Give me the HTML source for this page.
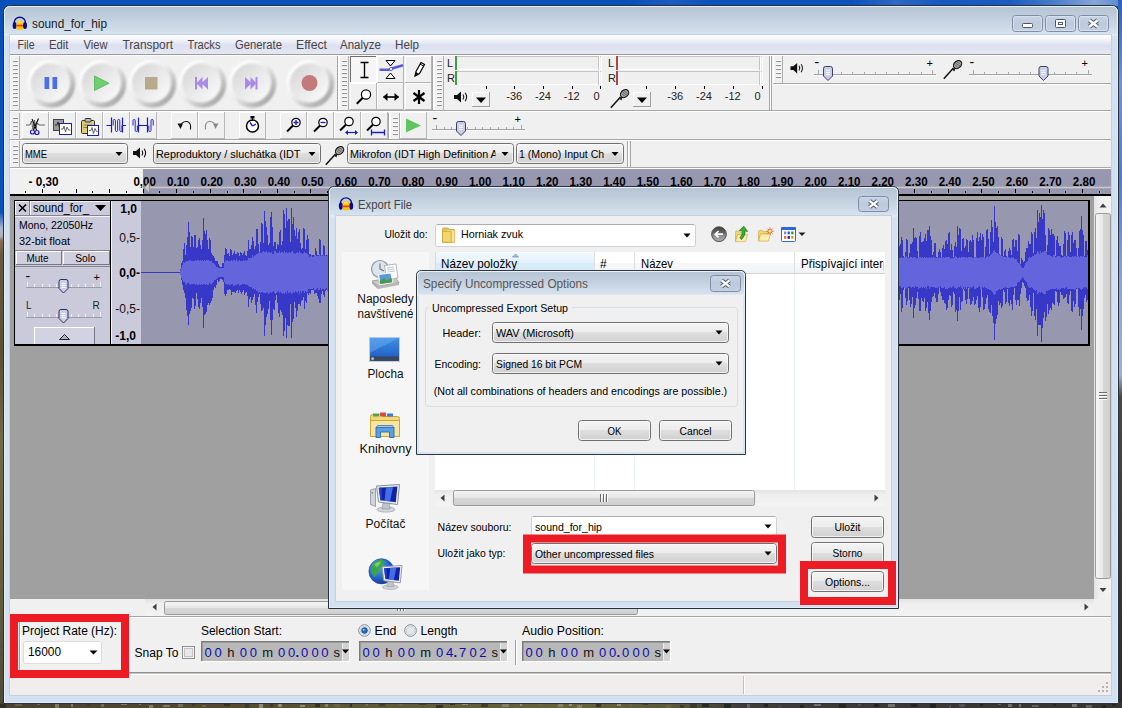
<!DOCTYPE html>
<html><head><meta charset="utf-8"><title>sound_for_hip</title>
<style>
html,body{margin:0;padding:0;background:#0b49ae;}
body{width:1122px;height:708px;overflow:hidden;}
svg{display:block;font-family:"Liberation Sans",sans-serif;}
</style></head><body>
<svg width="1122" height="708" viewBox="0 0 1122 708">
<defs>
<linearGradient id="gTitle" x1="0" y1="0" x2="0" y2="1"><stop offset="0" stop-color="#b5c3d3"/><stop offset="0.5" stop-color="#c5d2e0"/><stop offset="1" stop-color="#d8e4f0"/></linearGradient>
<linearGradient id="gMenu" x1="0" y1="0" x2="0" y2="1"><stop offset="0" stop-color="#ffffff"/><stop offset="0.18" stop-color="#f6f8fc"/><stop offset="0.42" stop-color="#e6e9f4"/><stop offset="0.55" stop-color="#dcdfee"/><stop offset="1" stop-color="#e5e8f4"/></linearGradient>
<linearGradient id="gBtn" x1="0" y1="0" x2="0" y2="1"><stop offset="0" stop-color="#f4f4f4"/><stop offset="0.48" stop-color="#ececec"/><stop offset="0.5" stop-color="#dedede"/><stop offset="1" stop-color="#d0d0d0"/></linearGradient>
<linearGradient id="gCap" x1="0" y1="0" x2="0" y2="1"><stop offset="0" stop-color="#c9d6e6"/><stop offset="0.5" stop-color="#bccadc"/><stop offset="1" stop-color="#c4d1e2"/></linearGradient>
<linearGradient id="gThumbH" x1="0" y1="0" x2="0" y2="1"><stop offset="0" stop-color="#f6f6f6"/><stop offset="0.5" stop-color="#e6e6e6"/><stop offset="0.52" stop-color="#d8d8d8"/><stop offset="1" stop-color="#cfcfcf"/></linearGradient>
<linearGradient id="gThumbV" x1="0" y1="0" x2="1" y2="0"><stop offset="0" stop-color="#f6f6f6"/><stop offset="0.5" stop-color="#e6e6e6"/><stop offset="0.52" stop-color="#d8d8d8"/><stop offset="1" stop-color="#cfcfcf"/></linearGradient>
<linearGradient id="gSbH" x1="0" y1="0" x2="0" y2="1"><stop offset="0" stop-color="#e3e3e3"/><stop offset="0.3" stop-color="#efefef"/><stop offset="1" stop-color="#f3f3f3"/></linearGradient>
<linearGradient id="gSbV" x1="0" y1="0" x2="1" y2="0"><stop offset="0" stop-color="#e3e3e3"/><stop offset="0.3" stop-color="#efefef"/><stop offset="1" stop-color="#f3f3f3"/></linearGradient>
<linearGradient id="gHdr" x1="0" y1="0" x2="0" y2="1"><stop offset="0" stop-color="#ffffff"/><stop offset="0.5" stop-color="#ffffff"/><stop offset="0.52" stop-color="#f7f8fa"/><stop offset="1" stop-color="#f1f2f4"/></linearGradient>
<linearGradient id="gHdrSel" x1="0" y1="0" x2="0" y2="1"><stop offset="0" stop-color="#f2f9fe"/><stop offset="0.5" stop-color="#e3f1fb"/><stop offset="0.52" stop-color="#d9ecf9"/><stop offset="1" stop-color="#d4e9f8"/></linearGradient>
<linearGradient id="gSky" x1="0" y1="0" x2="0" y2="1"><stop offset="0" stop-color="#0650bc"/><stop offset="1" stop-color="#0a54c0"/></linearGradient>
<radialGradient id="gKnob" cx="0.42" cy="0.38" r="0.62"><stop offset="0" stop-color="#fdfdfd"/><stop offset=".55" stop-color="#f3f3f3"/><stop offset=".8" stop-color="#e4e4e4"/><stop offset="1" stop-color="#cfcfcf"/></radialGradient>
<radialGradient id="gKnobSh" cx="0.5" cy="0.5" r="0.5"><stop offset="0.75" stop-color="#bdbdbd" stop-opacity=".9"/><stop offset="1" stop-color="#d8d8d8" stop-opacity="0"/></radialGradient>
<linearGradient id="gCloud" x1="0" y1="0" x2="1" y2="0"><stop offset="0" stop-color="#0650bc"/><stop offset="0.12" stop-color="#0650bc"/><stop offset="0.2" stop-color="#1c5cc0"/><stop offset="0.27" stop-color="#0a52be"/><stop offset="0.52" stop-color="#0a52be"/><stop offset="0.6" stop-color="#3068c4"/><stop offset="0.68" stop-color="#1458c0"/><stop offset="0.8" stop-color="#1a5cc0"/><stop offset="0.88" stop-color="#4a7cca"/><stop offset="0.95" stop-color="#86a6d8"/><stop offset="1" stop-color="#5a88d0"/></linearGradient>
<linearGradient id="gLeft" x1="0" y1="0" x2="0" y2="1"><stop offset="0" stop-color="#0850b8"/><stop offset="0.3" stop-color="#0a52bc"/><stop offset="0.312" stop-color="#5f88cc"/><stop offset="0.322" stop-color="#aab6d2"/><stop offset="0.333" stop-color="#b4b4c4"/><stop offset="0.34" stop-color="#8a6c54"/><stop offset="0.36" stop-color="#6a5840"/><stop offset="0.5" stop-color="#5a5034"/><stop offset="0.62" stop-color="#6f6a48"/><stop offset="0.8" stop-color="#67603f"/><stop offset="1" stop-color="#4d4a3a"/></linearGradient>
<linearGradient id="gRight" x1="0" y1="0" x2="0" y2="1"><stop offset="0" stop-color="#2a60bc"/><stop offset="0.12" stop-color="#6f94d0"/><stop offset="0.25" stop-color="#4f7cc8"/><stop offset="0.4" stop-color="#8aa6d4"/><stop offset="0.53" stop-color="#9fb0cc"/><stop offset="0.56" stop-color="#4a4844"/><stop offset="0.8" stop-color="#3a3834"/><stop offset="1" stop-color="#2c2a28"/></linearGradient>
<linearGradient id="gBot" x1="0" y1="0" x2="1" y2="0"><stop offset="0" stop-color="#4a4232"/><stop offset="0.2" stop-color="#54482f"/><stop offset="0.3" stop-color="#5c5636"/><stop offset="0.5" stop-color="#66623c"/><stop offset="0.6" stop-color="#5a5a3a"/><stop offset="0.66" stop-color="#3e3c38"/><stop offset="1" stop-color="#363432"/></linearGradient>
<linearGradient id="gRing" x1="0.15" y1="0.15" x2="0.85" y2="0.85"><stop offset="0" stop-color="#ffffff"/><stop offset=".45" stop-color="#ececec"/><stop offset=".75" stop-color="#c6c6c6"/><stop offset="1" stop-color="#a8a8a8"/></linearGradient>
<linearGradient id="gDish" x1="0.15" y1="0.15" x2="0.85" y2="0.85"><stop offset="0" stop-color="#dadada"/><stop offset=".5" stop-color="#e9e9e9"/><stop offset="1" stop-color="#f7f7f7"/></linearGradient>
<filter id="bl1" x="-20%" y="-20%" width="140%" height="140%"><feGaussianBlur stdDeviation="1.3"/></filter>
<filter id="bl2" x="-20%" y="-20%" width="140%" height="140%"><feGaussianBlur stdDeviation="0.9"/></filter>
<clipPath id="cl347_143"><rect x="347" y="143" width="148.5" height="21"/></clipPath>
<clipPath id="cl516_143"><rect x="516" y="143" width="88" height="21"/></clipPath>
<linearGradient id="gBack" x1="0" y1="0" x2="0" y2="1"><stop offset="0" stop-color="#3e3e3e"/><stop offset="0.45" stop-color="#6a6a6a"/><stop offset="0.55" stop-color="#8a8a8a"/><stop offset="1" stop-color="#b0b0b0"/></linearGradient>
<linearGradient id="gDesk" x1="0" y1="0" x2="0" y2="1"><stop offset="0" stop-color="#3f8fe6"/><stop offset="0.6" stop-color="#2a6ed0"/><stop offset="1" stop-color="#1c50b0"/></linearGradient>
<radialGradient id="gGlobe" cx="0.35" cy="0.3" r="0.8"><stop offset="0" stop-color="#6ab0f4"/><stop offset=".5" stop-color="#2a6ad8"/><stop offset="1" stop-color="#12308a"/></radialGradient>
<clipPath id="clHdr"><rect x="795" y="252" width="88.6" height="22"/></clipPath>
</defs>
<rect x="0" y="0" width="1122" height="708" fill="#0850b8" />
<rect x="0" y="0" width="1122" height="7" fill="url(#gSky)" />
<rect x="560" y="0" width="562" height="6" fill="url(#gCloud)" />
<rect x="0" y="0" width="4" height="708" fill="url(#gLeft)" />
<rect x="1118" y="0" width="4" height="708" fill="url(#gRight)" />
<rect x="0" y="702" width="1122" height="6" fill="url(#gBot)" />
<rect x="0" y="704" width="6" height="4" fill="#2e2a20" opacity=".8"/>
<rect x="15" y="703" width="7" height="3" fill="#6e6848" opacity=".8"/>
<rect x="37" y="703" width="3" height="2" fill="#7d765e" opacity=".8"/>
<rect x="55" y="704" width="4" height="4" fill="#8e886e" opacity=".8"/>
<rect x="71" y="703" width="2" height="4" fill="#8e886e" opacity=".8"/>
<rect x="87" y="703" width="3" height="3" fill="#3a3426" opacity=".8"/>
<rect x="101" y="703" width="3" height="4" fill="#7d765e" opacity=".8"/>
<rect x="121" y="703" width="6" height="2" fill="#8e886e" opacity=".8"/>
<rect x="139" y="703" width="2" height="2" fill="#8e886e" opacity=".8"/>
<rect x="149" y="705" width="4" height="4" fill="#8e886e" opacity=".8"/>
<rect x="163" y="705" width="7" height="2" fill="#8e886e" opacity=".8"/>
<rect x="178" y="704" width="5" height="3" fill="#7d765e" opacity=".8"/>
<rect x="192" y="703" width="3" height="3" fill="#3a3426" opacity=".8"/>
<rect x="202" y="705" width="4" height="2" fill="#6e6848" opacity=".8"/>
<rect x="224" y="704" width="6" height="2" fill="#2e2a20" opacity=".8"/>
<rect x="245" y="704" width="4" height="4" fill="#3a3426" opacity=".8"/>
<rect x="259" y="704" width="4" height="4" fill="#a09a84" opacity=".8"/>
<rect x="270" y="703" width="3" height="4" fill="#3a3426" opacity=".8"/>
<rect x="278" y="703" width="4" height="4" fill="#a09a84" opacity=".8"/>
<rect x="300" y="705" width="5" height="2" fill="#a09a84" opacity=".8"/>
<rect x="315" y="703" width="5" height="4" fill="#2e2a20" opacity=".8"/>
<rect x="325" y="704" width="3" height="3" fill="#8e886e" opacity=".8"/>
<rect x="334" y="704" width="6" height="3" fill="#6e6848" opacity=".8"/>
<rect x="350" y="704" width="2" height="3" fill="#2e2a20" opacity=".8"/>
<rect x="366" y="703" width="2" height="3" fill="#7d765e" opacity=".8"/>
<rect x="379" y="703" width="6" height="3" fill="#3a3426" opacity=".8"/>
<rect x="399" y="703" width="4" height="3" fill="#6e6848" opacity=".8"/>
<rect x="419" y="703" width="7" height="2" fill="#3a3426" opacity=".8"/>
<rect x="436" y="705" width="7" height="3" fill="#2e2a20" opacity=".8"/>
<rect x="450" y="703" width="5" height="2" fill="#2e2a20" opacity=".8"/>
<rect x="462" y="703" width="6" height="2" fill="#a09a84" opacity=".8"/>
<rect x="481" y="704" width="7" height="3" fill="#3a3426" opacity=".8"/>
<rect x="502" y="703" width="7" height="4" fill="#8e886e" opacity=".8"/>
<rect x="520" y="704" width="2" height="2" fill="#a09a84" opacity=".8"/>
<rect x="539" y="703" width="3" height="4" fill="#6e6848" opacity=".8"/>
<rect x="558" y="704" width="5" height="3" fill="#8e886e" opacity=".8"/>
<rect x="569" y="704" width="3" height="2" fill="#a09a84" opacity=".8"/>
<rect x="577" y="705" width="5" height="3" fill="#8e886e" opacity=".8"/>
<rect x="596" y="704" width="5" height="3" fill="#2e2a20" opacity=".8"/>
<rect x="617" y="704" width="4" height="2" fill="#a09a84" opacity=".8"/>
<rect x="630" y="703" width="2" height="4" fill="#6e6848" opacity=".8"/>
<rect x="643" y="703" width="5" height="2" fill="#3a3426" opacity=".8"/>
<rect x="666" y="705" width="5" height="4" fill="#6e6848" opacity=".8"/>
<rect x="680" y="705" width="4" height="4" fill="#3a3426" opacity=".8"/>
<rect x="690" y="704" width="7" height="4" fill="#3a3426" opacity=".8"/>
<rect x="702" y="704" width="7" height="3" fill="#222222" opacity=".8"/>
<rect x="724" y="704" width="7" height="4" fill="#222222" opacity=".8"/>
<rect x="747" y="704" width="3" height="4" fill="#6a6a6a" opacity=".8"/>
<rect x="764" y="704" width="4" height="3" fill="#1e1e1e" opacity=".8"/>
<rect x="778" y="705" width="4" height="4" fill="#4a4a48" opacity=".8"/>
<rect x="800" y="705" width="4" height="3" fill="#222222" opacity=".8"/>
<rect x="814" y="704" width="7" height="2" fill="#7e7e7e" opacity=".8"/>
<rect x="839" y="704" width="7" height="4" fill="#222222" opacity=".8"/>
<rect x="858" y="703" width="3" height="3" fill="#585858" opacity=".8"/>
<rect x="874" y="703" width="5" height="4" fill="#1e1e1e" opacity=".8"/>
<rect x="888" y="703" width="7" height="4" fill="#7e7e7e" opacity=".8"/>
<rect x="911" y="704" width="6" height="3" fill="#1e1e1e" opacity=".8"/>
<rect x="930" y="704" width="6" height="4" fill="#1e1e1e" opacity=".8"/>
<rect x="949" y="705" width="2" height="3" fill="#585858" opacity=".8"/>
<rect x="959" y="703" width="6" height="4" fill="#585858" opacity=".8"/>
<rect x="980" y="703" width="3" height="3" fill="#1e1e1e" opacity=".8"/>
<rect x="998" y="703" width="3" height="2" fill="#6a6a6a" opacity=".8"/>
<rect x="1008" y="703" width="4" height="4" fill="#7e7e7e" opacity=".8"/>
<rect x="1019" y="704" width="2" height="3" fill="#7e7e7e" opacity=".8"/>
<rect x="1032" y="705" width="7" height="2" fill="#6a6a6a" opacity=".8"/>
<rect x="1053" y="703" width="3" height="3" fill="#222222" opacity=".8"/>
<rect x="1072" y="703" width="5" height="4" fill="#7e7e7e" opacity=".8"/>
<rect x="1086" y="705" width="6" height="4" fill="#6a6a6a" opacity=".8"/>
<rect x="1102" y="705" width="4" height="4" fill="#222222" opacity=".8"/>
<rect x="1112" y="704" width="4" height="2" fill="#222222" opacity=".8"/>
<path d="M3.5 703.5 V12.5 Q3.5 5.5 10.5 5.5 H1111.5 Q1118.5 5.5 1118.5 12.5 V703.5 Z" fill="#d2e0f0" stroke="#27303c" />
<path d="M4.5 35 V12.5 Q4.5 6.5 10.5 6.5 H1111.5 Q1117.5 6.5 1117.5 12.5 V35 Z" fill="url(#gTitle)" stroke="#e8f0f8" />
<rect x="4" y="35" width="1" height="667" fill="#e4edf7"/>
<rect x="1117" y="35" width="1" height="667" fill="#e4edf7"/>
<rect x="4" y="702" width="1114" height="1" fill="#e4edf7"/>
<rect x="9.5" y="34.5" width="1102" height="661" fill="#f0f0f0" stroke="#c3d0e0" />
<g transform="translate(19.8,23.4) scale(1.0)">
<path d="M-5.6 1.5 V-0.8 A5.6 5.3 0 0 1 5.6 -0.8 V1.5" fill="none" stroke="#0c0c8a" stroke-width="1.4" />
<ellipse cx="-5.2" cy="2.1" rx="2" ry="3.6" fill="#0c0c8a"/><ellipse cx="5.2" cy="2.1" rx="2" ry="3.6" fill="#0c0c8a"/>
<path d="M-3.2 6 V-0.5 Q-3 -2.6 -1.4 -3 L-0.6 -2.4 L0 -3.2 L0.8 -2.4 L1.6 -3 Q3 -2.6 3.2 -0.5 V6 Q0 6.8 -3.2 6 Z" fill="#fcc400" />
<path d="M-3.2 1.6 H3.2 V3 H-3.2 Z" fill="#f03a10" />
<path d="M-3.2 1.1 H3.2 V1.6 H-3.2 Z M-3.2 3 H3.2 V3.5 H-3.2 Z" fill="#f88a10" />
<path d="M-2 -2 Q0 -3 2 -2 V0 H-2 Z" fill="#fde45a" opacity=".7"/>
</g>
<text x="32" y="28" font-size="12" fill="#1c1c1c" textLength="75" lengthAdjust="spacingAndGlyphs" >sound_for_hip</text>
<rect x="1012.5" y="15.5" width="30" height="16" fill="url(#gCap)" stroke="#7f8da6" rx="3" />
<rect x="1013.5" y="16.5" width="28" height="14" fill="none" stroke="#dbe4f0" rx="2" opacity=".8"/>
<rect x="1045.5" y="15.5" width="30" height="16" fill="url(#gCap)" stroke="#7f8da6" rx="3" />
<rect x="1046.5" y="16.5" width="28" height="14" fill="none" stroke="#dbe4f0" rx="2" opacity=".8"/>
<rect x="1078.5" y="15.5" width="30" height="16" fill="url(#gCap)" stroke="#7f8da6" rx="3" />
<rect x="1079.5" y="16.5" width="28" height="14" fill="none" stroke="#dbe4f0" rx="2" opacity=".8"/>
<rect x="1022.5" y="23.5" width="10" height="4" fill="#fff" stroke="#4a566a" rx="1" />
<rect x="1055.5" y="19.5" width="10" height="8" fill="#fff" stroke="#4a566a" rx="1" />
<rect x="1058.5" y="22.5" width="4" height="2" fill="#fff" stroke="#4a566a" />
<path d="M1089.3 20.3 L1097.7 26.7 M1097.7 20.3 L1089.3 26.7" fill="none" stroke="#4a566a" stroke-width="4.4" stroke-linecap="butt"/>
<path d="M1089.3 20.3 L1097.7 26.7 M1097.7 20.3 L1089.3 26.7" fill="none" stroke="#fff" stroke-width="2.6000000000000005" stroke-linecap="butt"/>
<rect x="10" y="35" width="1101" height="19" fill="url(#gMenu)" />
<text x="17.5" y="49" font-size="12" fill="#4a4444" textLength="17" lengthAdjust="spacingAndGlyphs" >File</text>
<text x="49" y="49" font-size="12" fill="#4a4444" textLength="19.5" lengthAdjust="spacingAndGlyphs" >Edit</text>
<text x="83.5" y="49" font-size="12" fill="#4a4444" textLength="24" lengthAdjust="spacingAndGlyphs" >View</text>
<text x="122.5" y="49" font-size="12" fill="#4a4444" textLength="50.5" lengthAdjust="spacingAndGlyphs" >Transport</text>
<text x="187.5" y="49" font-size="12" fill="#4a4444" textLength="33" lengthAdjust="spacingAndGlyphs" >Tracks</text>
<text x="235" y="49" font-size="12" fill="#4a4444" textLength="47" lengthAdjust="spacingAndGlyphs" >Generate</text>
<text x="296" y="49" font-size="12" fill="#4a4444" textLength="31" lengthAdjust="spacingAndGlyphs" >Effect</text>
<text x="340" y="49" font-size="12" fill="#4a4444" textLength="41" lengthAdjust="spacingAndGlyphs" >Analyze</text>
<text x="395" y="49" font-size="12" fill="#4a4444" textLength="24" lengthAdjust="spacingAndGlyphs" >Help</text>
<rect x="10" y="54" width="1101" height="114" fill="#f0f0f0" />
<rect x="10" y="54" width="1101" height="1" fill="#9c9c9c"/>
<rect x="10" y="55" width="1101" height="1" fill="#ffffff"/>
<rect x="773" y="83" width="338" height="1" fill="#a6a6a6"/>
<rect x="773" y="84" width="338" height="1" fill="#ffffff"/>
<rect x="10" y="110" width="1101" height="1" fill="#a6a6a6"/>
<rect x="10" y="111" width="1101" height="1" fill="#ffffff"/>
<rect x="10" y="139" width="1101" height="1" fill="#a6a6a6"/>
<rect x="10" y="140" width="1101" height="1" fill="#ffffff"/>
<rect x="10" y="167" width="1101" height="1" fill="#a6a6a6"/>
<rect x="10" y="56" width="1" height="54" fill="#ffffff"/>
<rect x="19" y="56" width="1" height="54" fill="#b0b0b0"/>
<rect x="13" y="60" width="5" height="1" fill="#ffffff"/>
<rect x="13" y="61" width="5" height="1" fill="#909090"/>
<rect x="13" y="64" width="5" height="1" fill="#ffffff"/>
<rect x="13" y="65" width="5" height="1" fill="#909090"/>
<rect x="13" y="68" width="5" height="1" fill="#ffffff"/>
<rect x="13" y="69" width="5" height="1" fill="#909090"/>
<rect x="13" y="72" width="5" height="1" fill="#ffffff"/>
<rect x="13" y="73" width="5" height="1" fill="#909090"/>
<rect x="13" y="76" width="5" height="1" fill="#ffffff"/>
<rect x="13" y="77" width="5" height="1" fill="#909090"/>
<rect x="13" y="80" width="5" height="1" fill="#ffffff"/>
<rect x="13" y="81" width="5" height="1" fill="#909090"/>
<rect x="13" y="84" width="5" height="1" fill="#ffffff"/>
<rect x="13" y="85" width="5" height="1" fill="#909090"/>
<rect x="13" y="88" width="5" height="1" fill="#ffffff"/>
<rect x="13" y="89" width="5" height="1" fill="#909090"/>
<rect x="13" y="92" width="5" height="1" fill="#ffffff"/>
<rect x="13" y="93" width="5" height="1" fill="#909090"/>
<rect x="13" y="96" width="5" height="1" fill="#ffffff"/>
<rect x="13" y="97" width="5" height="1" fill="#909090"/>
<rect x="13" y="100" width="5" height="1" fill="#ffffff"/>
<rect x="13" y="101" width="5" height="1" fill="#909090"/>
<rect x="13" y="104" width="5" height="1" fill="#ffffff"/>
<rect x="13" y="105" width="5" height="1" fill="#909090"/>
<rect x="337" y="56" width="1" height="54" fill="#a6a6a6"/>
<rect x="338" y="56" width="1" height="54" fill="#ffffff"/>
<circle cx="51.3" cy="83.8" r="24" fill="url(#gRing)" filter="url(#bl1)"/>
<circle cx="50.5" cy="83" r="19.5" fill="url(#gDish)" filter="url(#bl2)"/>
<circle cx="102.3" cy="83.8" r="24" fill="url(#gRing)" filter="url(#bl1)"/>
<circle cx="101.5" cy="83" r="19.5" fill="url(#gDish)" filter="url(#bl2)"/>
<circle cx="152.3" cy="83.8" r="24" fill="url(#gRing)" filter="url(#bl1)"/>
<circle cx="151.5" cy="83" r="19.5" fill="url(#gDish)" filter="url(#bl2)"/>
<circle cx="202.3" cy="83.8" r="24" fill="url(#gRing)" filter="url(#bl1)"/>
<circle cx="201.5" cy="83" r="19.5" fill="url(#gDish)" filter="url(#bl2)"/>
<circle cx="252.3" cy="83.8" r="24" fill="url(#gRing)" filter="url(#bl1)"/>
<circle cx="251.5" cy="83" r="19.5" fill="url(#gDish)" filter="url(#bl2)"/>
<circle cx="310.3" cy="83.8" r="24" fill="url(#gRing)" filter="url(#bl1)"/>
<circle cx="309.5" cy="83" r="19.5" fill="url(#gDish)" filter="url(#bl2)"/>
<rect x="44.5" y="77" width="4.7" height="12" fill="#4c6ee6" />
<rect x="52.5" y="77" width="4.7" height="12" fill="#4c6ee6" />
<path d="M94.5 76 L109 83.2 L94.5 90.4 Z" fill="#6ed06e" stroke="#52b052" stroke-width="0.8" />
<rect x="145" y="77" width="12.5" height="12.5" fill="#b9aa8b" />
<rect x="195" y="77" width="2" height="12.5" fill="#a98ae8" />
<path d="M208 77 V89.5 L201.5 83.2 Z M202.5 77 V89.5 L196.5 83.2 Z" fill="#a98ae8" />
<rect x="255.5" y="77" width="2" height="12.5" fill="#a98ae8" />
<path d="M245 77 V89.5 L251.5 83.2 Z M250.5 77 V89.5 L256.5 83.2 Z" fill="#a98ae8" />
<circle cx="309.5" cy="83" r="8" fill="#c27a7a"/>
<rect x="339" y="56" width="1" height="54" fill="#ffffff"/>
<rect x="348" y="56" width="1" height="54" fill="#b0b0b0"/>
<rect x="342" y="60" width="5" height="1" fill="#ffffff"/>
<rect x="342" y="61" width="5" height="1" fill="#909090"/>
<rect x="342" y="64" width="5" height="1" fill="#ffffff"/>
<rect x="342" y="65" width="5" height="1" fill="#909090"/>
<rect x="342" y="68" width="5" height="1" fill="#ffffff"/>
<rect x="342" y="69" width="5" height="1" fill="#909090"/>
<rect x="342" y="72" width="5" height="1" fill="#ffffff"/>
<rect x="342" y="73" width="5" height="1" fill="#909090"/>
<rect x="342" y="76" width="5" height="1" fill="#ffffff"/>
<rect x="342" y="77" width="5" height="1" fill="#909090"/>
<rect x="342" y="80" width="5" height="1" fill="#ffffff"/>
<rect x="342" y="81" width="5" height="1" fill="#909090"/>
<rect x="342" y="84" width="5" height="1" fill="#ffffff"/>
<rect x="342" y="85" width="5" height="1" fill="#909090"/>
<rect x="342" y="88" width="5" height="1" fill="#ffffff"/>
<rect x="342" y="89" width="5" height="1" fill="#909090"/>
<rect x="342" y="92" width="5" height="1" fill="#ffffff"/>
<rect x="342" y="93" width="5" height="1" fill="#909090"/>
<rect x="342" y="96" width="5" height="1" fill="#ffffff"/>
<rect x="342" y="97" width="5" height="1" fill="#909090"/>
<rect x="342" y="100" width="5" height="1" fill="#ffffff"/>
<rect x="342" y="101" width="5" height="1" fill="#909090"/>
<rect x="342" y="104" width="5" height="1" fill="#ffffff"/>
<rect x="342" y="105" width="5" height="1" fill="#909090"/>
<rect x="432" y="56" width="1" height="54" fill="#a6a6a6"/>
<rect x="433" y="56" width="1" height="54" fill="#ffffff"/>
<rect x="350" y="56" width="27" height="27" fill="#f6f6f6" />
<rect x="350" y="56" width="27" height="1" fill="#6e6e6e"/>
<rect x="350" y="56" width="1" height="27" fill="#6e6e6e"/>
<rect x="350" y="82" width="27" height="1" fill="#ffffff"/>
<rect x="376" y="56" width="1" height="27" fill="#ffffff"/>
<rect x="377" y="56" width="27" height="1" fill="#ffffff"/>
<rect x="377" y="56" width="1" height="27" fill="#ffffff"/>
<rect x="377" y="82" width="27" height="1" fill="#b4b4b4"/>
<rect x="403" y="56" width="1" height="27" fill="#b4b4b4"/>
<rect x="405" y="56" width="27" height="1" fill="#ffffff"/>
<rect x="405" y="56" width="1" height="27" fill="#ffffff"/>
<rect x="405" y="82" width="27" height="1" fill="#b4b4b4"/>
<rect x="431" y="56" width="1" height="27" fill="#b4b4b4"/>
<rect x="350" y="83" width="27" height="1" fill="#ffffff"/>
<rect x="350" y="83" width="1" height="27" fill="#ffffff"/>
<rect x="350" y="109" width="27" height="1" fill="#b4b4b4"/>
<rect x="376" y="83" width="1" height="27" fill="#b4b4b4"/>
<rect x="377" y="83" width="27" height="1" fill="#ffffff"/>
<rect x="377" y="83" width="1" height="27" fill="#ffffff"/>
<rect x="377" y="109" width="27" height="1" fill="#b4b4b4"/>
<rect x="403" y="83" width="1" height="27" fill="#b4b4b4"/>
<rect x="405" y="83" width="27" height="1" fill="#ffffff"/>
<rect x="405" y="83" width="1" height="27" fill="#ffffff"/>
<rect x="405" y="109" width="27" height="1" fill="#b4b4b4"/>
<rect x="431" y="83" width="1" height="27" fill="#b4b4b4"/>
<path d="M360.5 62.5 H368.5 M364.5 62.5 V77.5 M360.5 77.5 H368.5" fill="none" stroke="#000" stroke-width="1.35" />
<path d="M386 60.5 H395 L390.5 66 Z" fill="#fff" stroke="#000" stroke-width="1" />
<path d="M386 78.5 H395 L390.5 73 Z" fill="#fff" stroke="#000" stroke-width="1" />
<path d="M379.5 69.8 H389 L392 68.6 L403 65.2" fill="none" stroke="#5a5ade" stroke-width="2.6" />
<circle cx="391" cy="69" r="1.6" fill="#fff" stroke="#4848d8" stroke-width=".8"/>
<path d="M415 76 L416 71.5 L421 62.5 L424.5 64.5 L419.5 73.5 Z" fill="#fff" stroke="#000" stroke-width="1.2" />
<path d="M415 76 L416.2 72 L418.5 73.7 Z" fill="#000" />
<path d="M420 64 L423.6 66" fill="none" stroke="#000" stroke-width="1" />
<path d="M362.78 97.72 L356.78 103.72" fill="none" stroke="#000" stroke-width="2" />
<circle cx="366" cy="94.5" r="4.6" fill="#fff" stroke="#000" stroke-width="1.2"/>
<path d="M383.5 97 H398.5" fill="none" stroke="#000" stroke-width="1.6" />
<path d="M383 97 L387.5 93 V101 Z M399 97 L394.5 93 V101 Z" fill="#000" />
<path d="M419 90 V104 M413.5 93 L424.5 101 M424.5 93 L413.5 101" fill="none" stroke="#000" stroke-width="2.2" />
<rect x="434" y="56" width="1" height="54" fill="#ffffff"/>
<rect x="443" y="56" width="1" height="54" fill="#b0b0b0"/>
<rect x="437" y="60" width="5" height="1" fill="#ffffff"/>
<rect x="437" y="61" width="5" height="1" fill="#909090"/>
<rect x="437" y="64" width="5" height="1" fill="#ffffff"/>
<rect x="437" y="65" width="5" height="1" fill="#909090"/>
<rect x="437" y="68" width="5" height="1" fill="#ffffff"/>
<rect x="437" y="69" width="5" height="1" fill="#909090"/>
<rect x="437" y="72" width="5" height="1" fill="#ffffff"/>
<rect x="437" y="73" width="5" height="1" fill="#909090"/>
<rect x="437" y="76" width="5" height="1" fill="#ffffff"/>
<rect x="437" y="77" width="5" height="1" fill="#909090"/>
<rect x="437" y="80" width="5" height="1" fill="#ffffff"/>
<rect x="437" y="81" width="5" height="1" fill="#909090"/>
<rect x="437" y="84" width="5" height="1" fill="#ffffff"/>
<rect x="437" y="85" width="5" height="1" fill="#909090"/>
<rect x="437" y="88" width="5" height="1" fill="#ffffff"/>
<rect x="437" y="89" width="5" height="1" fill="#909090"/>
<rect x="437" y="92" width="5" height="1" fill="#ffffff"/>
<rect x="437" y="93" width="5" height="1" fill="#909090"/>
<rect x="437" y="96" width="5" height="1" fill="#ffffff"/>
<rect x="437" y="97" width="5" height="1" fill="#909090"/>
<rect x="437" y="100" width="5" height="1" fill="#ffffff"/>
<rect x="437" y="101" width="5" height="1" fill="#909090"/>
<rect x="437" y="104" width="5" height="1" fill="#ffffff"/>
<rect x="437" y="105" width="5" height="1" fill="#909090"/>
<rect x="769" y="56" width="1" height="54" fill="#a6a6a6"/>
<rect x="770" y="56" width="1" height="54" fill="#ffffff"/>
<rect x="771" y="56" width="1" height="54" fill="#a6a6a6"/>
<text x="447" y="67" font-size="11" fill="#222" >L</text>
<text x="447" y="82" font-size="11" fill="#222" >R</text>
<rect x="455" y="56" width="147" height="14" fill="#efefef" />
<rect x="455" y="56" width="147" height="1" fill="#c4c4c4"/>
<rect x="455" y="69" width="147" height="1" fill="#ffffff"/>
<rect x="601" y="56" width="1" height="14" fill="#ffffff"/>
<rect x="455" y="56" width="1" height="14" fill="#3f9e3f"/>
<rect x="456" y="56" width="1" height="14" fill="#3f9e3f"/>
<rect x="598" y="56" width="1" height="14" fill="#c4c4c4"/>
<rect x="599" y="56" width="1" height="14" fill="#ffffff"/>
<rect x="455" y="71" width="147" height="14" fill="#efefef" />
<rect x="455" y="71" width="147" height="1" fill="#c4c4c4"/>
<rect x="455" y="84" width="147" height="1" fill="#ffffff"/>
<rect x="601" y="71" width="1" height="14" fill="#ffffff"/>
<rect x="455" y="71" width="1" height="14" fill="#3f9e3f"/>
<rect x="456" y="71" width="1" height="14" fill="#3f9e3f"/>
<rect x="598" y="71" width="1" height="14" fill="#c4c4c4"/>
<rect x="599" y="71" width="1" height="14" fill="#ffffff"/>
<text x="608" y="67" font-size="11" fill="#222" >L</text>
<text x="608" y="82" font-size="11" fill="#222" >R</text>
<rect x="616" y="56" width="147" height="14" fill="#efefef" />
<rect x="616" y="56" width="147" height="1" fill="#c4c4c4"/>
<rect x="616" y="69" width="147" height="1" fill="#ffffff"/>
<rect x="762" y="56" width="1" height="14" fill="#ffffff"/>
<rect x="616" y="56" width="1" height="14" fill="#b0483c"/>
<rect x="617" y="56" width="1" height="14" fill="#b0483c"/>
<rect x="759" y="56" width="1" height="14" fill="#c4c4c4"/>
<rect x="760" y="56" width="1" height="14" fill="#ffffff"/>
<rect x="616" y="71" width="147" height="14" fill="#efefef" />
<rect x="616" y="71" width="147" height="1" fill="#c4c4c4"/>
<rect x="616" y="84" width="147" height="1" fill="#ffffff"/>
<rect x="762" y="71" width="1" height="14" fill="#ffffff"/>
<rect x="616" y="71" width="1" height="14" fill="#b0483c"/>
<rect x="617" y="71" width="1" height="14" fill="#b0483c"/>
<rect x="759" y="71" width="1" height="14" fill="#c4c4c4"/>
<rect x="760" y="71" width="1" height="14" fill="#ffffff"/>
<rect x="486" y="86" width="1" height="3" fill="#000"/>
<rect x="514" y="86" width="1" height="3" fill="#000"/>
<text x="514.25" y="100" font-size="11" fill="#222" text-anchor="middle" >-36</text>
<rect x="543" y="86" width="1" height="3" fill="#000"/>
<text x="543.0" y="100" font-size="11" fill="#222" text-anchor="middle" >-24</text>
<rect x="572" y="86" width="1" height="3" fill="#000"/>
<text x="571.75" y="100" font-size="11" fill="#222" text-anchor="middle" >-12</text>
<rect x="600" y="86" width="1" height="3" fill="#000"/>
<text x="599.5" y="100" font-size="11" fill="#222" text-anchor="end" >0</text>
<rect x="646" y="86" width="1" height="3" fill="#000"/>
<rect x="675" y="86" width="1" height="3" fill="#000"/>
<text x="675.25" y="100" font-size="11" fill="#222" text-anchor="middle" >-36</text>
<rect x="704" y="86" width="1" height="3" fill="#000"/>
<text x="704.0" y="100" font-size="11" fill="#222" text-anchor="middle" >-24</text>
<rect x="733" y="86" width="1" height="3" fill="#000"/>
<text x="732.75" y="100" font-size="11" fill="#222" text-anchor="middle" >-12</text>
<rect x="762" y="86" width="1" height="3" fill="#000"/>
<text x="760.5" y="100" font-size="11" fill="#222" text-anchor="end" >0</text>
<g transform="translate(454,91) scale(1.0)">
<path d="M0 4 H3 L7 0.5 V11.5 L3 8 H0 Z" fill="#111" />
<path d="M9 3.5 Q10.6 6 9 8.5 M11.2 1.8 Q14 6 11.2 10.2" fill="none" stroke="#111" stroke-width="1.1" />
</g>
<rect x="472" y="92" width="18" height="1" fill="#ffffff"/>
<rect x="472" y="92" width="1" height="15" fill="#ffffff"/>
<rect x="472" y="106" width="18" height="1" fill="#9e9e9e"/>
<rect x="489" y="92" width="1" height="15" fill="#9e9e9e"/>
<path d="M476.0 97.5 H486.0 L481.0 103.0 Z" fill="#000" />
<g transform="translate(610,88) scale(1.0)">
<path d="M0.8 19.8 L10.5 9" fill="none" stroke="#111" stroke-width="1.5" />
<path d="M8.6 10.2 L11.4 12.6 L12.8 8.4 Z" fill="#222" />
<ellipse cx="14.6" cy="5.6" rx="4.6" ry="3.5" transform="rotate(-42 14.6 5.6)" fill="#a4a4a4" stroke="#111" stroke-width="1.1"/>
<path d="M12.2 3.8 L17 7.4 M13.6 2.6 L18 5.8 M11.6 5.6 L15.8 9" fill="none" stroke="#444" stroke-width="0.6" />
</g>
<rect x="633" y="92" width="18" height="1" fill="#ffffff"/>
<rect x="633" y="92" width="1" height="15" fill="#ffffff"/>
<rect x="633" y="106" width="18" height="1" fill="#9e9e9e"/>
<rect x="650" y="92" width="1" height="15" fill="#9e9e9e"/>
<path d="M637.0 97.5 H647.0 L642.0 103.0 Z" fill="#000" />
<rect x="773" y="56" width="1" height="27" fill="#ffffff"/>
<rect x="782" y="56" width="1" height="27" fill="#b0b0b0"/>
<rect x="776" y="60" width="5" height="1" fill="#ffffff"/>
<rect x="776" y="61" width="5" height="1" fill="#909090"/>
<rect x="776" y="64" width="5" height="1" fill="#ffffff"/>
<rect x="776" y="65" width="5" height="1" fill="#909090"/>
<rect x="776" y="68" width="5" height="1" fill="#ffffff"/>
<rect x="776" y="69" width="5" height="1" fill="#909090"/>
<rect x="776" y="72" width="5" height="1" fill="#ffffff"/>
<rect x="776" y="73" width="5" height="1" fill="#909090"/>
<rect x="776" y="76" width="5" height="1" fill="#ffffff"/>
<rect x="776" y="77" width="5" height="1" fill="#909090"/>
<g transform="translate(790.5,62.5) scale(0.95)">
<path d="M0 4 H3 L7 0.5 V11.5 L3 8 H0 Z" fill="#111" />
<path d="M9 3.5 Q10.6 6 9 8.5 M11.2 1.8 Q14 6 11.2 10.2" fill="none" stroke="#111" stroke-width="1.1" />
</g>
<rect x="814" y="74" width="122" height="1" fill="#a4a4a4"/>
<rect x="814" y="75" width="122" height="1" fill="#f8f8f8"/>
<rect x="818" y="70" width="1" height="4" fill="#a8a8a8"/>
<rect x="829" y="72" width="1" height="2" fill="#a8a8a8"/>
<rect x="841" y="72" width="1" height="2" fill="#a8a8a8"/>
<rect x="852" y="72" width="1" height="2" fill="#a8a8a8"/>
<rect x="864" y="72" width="1" height="2" fill="#a8a8a8"/>
<rect x="875" y="72" width="1" height="2" fill="#a8a8a8"/>
<rect x="886" y="72" width="1" height="2" fill="#a8a8a8"/>
<rect x="898" y="72" width="1" height="2" fill="#a8a8a8"/>
<rect x="909" y="72" width="1" height="2" fill="#a8a8a8"/>
<rect x="921" y="72" width="1" height="2" fill="#a8a8a8"/>
<rect x="932" y="70" width="1" height="4" fill="#a8a8a8"/>
<path d="M823.5 68.5 Q823.5 66.5 825.5 66.5 H830.5 Q832.5 66.5 832.5 68.5 V76 L828 80.5 L823.5 76 Z" fill="#c9cdee" stroke="#40405a" stroke-width="1" />
<rect x="826" y="70" width="4" height="1" fill="#fff"/>
<rect x="826" y="72" width="4" height="1" fill="#fff"/>
<rect x="826" y="74" width="4" height="1" fill="#fff"/>
<text x="814.5" y="67" font-size="14" >-</text>
<text x="926.5" y="66.5" font-size="11" >+</text>
<g transform="translate(943,59) scale(1.0)">
<path d="M0.8 19.8 L10.5 9" fill="none" stroke="#111" stroke-width="1.5" />
<path d="M8.6 10.2 L11.4 12.6 L12.8 8.4 Z" fill="#222" />
<ellipse cx="14.6" cy="5.6" rx="4.6" ry="3.5" transform="rotate(-42 14.6 5.6)" fill="#a4a4a4" stroke="#111" stroke-width="1.1"/>
<path d="M12.2 3.8 L17 7.4 M13.6 2.6 L18 5.8 M11.6 5.6 L15.8 9" fill="none" stroke="#444" stroke-width="0.6" />
</g>
<rect x="969" y="74" width="123" height="1" fill="#a4a4a4"/>
<rect x="969" y="75" width="123" height="1" fill="#f8f8f8"/>
<rect x="973" y="70" width="1" height="4" fill="#a8a8a8"/>
<rect x="984" y="72" width="1" height="2" fill="#a8a8a8"/>
<rect x="996" y="72" width="1" height="2" fill="#a8a8a8"/>
<rect x="1008" y="72" width="1" height="2" fill="#a8a8a8"/>
<rect x="1019" y="72" width="1" height="2" fill="#a8a8a8"/>
<rect x="1030" y="72" width="1" height="2" fill="#a8a8a8"/>
<rect x="1042" y="72" width="1" height="2" fill="#a8a8a8"/>
<rect x="1054" y="72" width="1" height="2" fill="#a8a8a8"/>
<rect x="1065" y="72" width="1" height="2" fill="#a8a8a8"/>
<rect x="1076" y="72" width="1" height="2" fill="#a8a8a8"/>
<rect x="1088" y="70" width="1" height="4" fill="#a8a8a8"/>
<path d="M1039.0 68.5 Q1039.0 66.5 1041.0 66.5 H1046.0 Q1048.0 66.5 1048.0 68.5 V76 L1043.5 80.5 L1039.0 76 Z" fill="#c9cdee" stroke="#40405a" stroke-width="1" />
<rect x="1041.5" y="70" width="4.0" height="1" fill="#fff"/>
<rect x="1041.5" y="72" width="4.0" height="1" fill="#fff"/>
<rect x="1041.5" y="74" width="4.0" height="1" fill="#fff"/>
<text x="969.5" y="67" font-size="14" >-</text>
<text x="1081.5" y="66.5" font-size="11" >+</text>
<rect x="10" y="113" width="1" height="26" fill="#ffffff"/>
<rect x="19" y="113" width="1" height="26" fill="#b0b0b0"/>
<rect x="13" y="117" width="5" height="1" fill="#ffffff"/>
<rect x="13" y="118" width="5" height="1" fill="#909090"/>
<rect x="13" y="121" width="5" height="1" fill="#ffffff"/>
<rect x="13" y="122" width="5" height="1" fill="#909090"/>
<rect x="13" y="125" width="5" height="1" fill="#ffffff"/>
<rect x="13" y="126" width="5" height="1" fill="#909090"/>
<rect x="13" y="129" width="5" height="1" fill="#ffffff"/>
<rect x="13" y="130" width="5" height="1" fill="#909090"/>
<rect x="13" y="133" width="5" height="1" fill="#ffffff"/>
<rect x="13" y="134" width="5" height="1" fill="#909090"/>
<rect x="22" y="112" width="27" height="1" fill="#ffffff"/>
<rect x="22" y="112" width="1" height="27" fill="#ffffff"/>
<rect x="22" y="138" width="27" height="1" fill="#b8b8b8"/>
<rect x="48" y="112" width="1" height="27" fill="#b8b8b8"/>
<rect x="49" y="112" width="27" height="1" fill="#ffffff"/>
<rect x="49" y="112" width="1" height="27" fill="#ffffff"/>
<rect x="49" y="138" width="27" height="1" fill="#b8b8b8"/>
<rect x="75" y="112" width="1" height="27" fill="#b8b8b8"/>
<rect x="76" y="112" width="27" height="1" fill="#ffffff"/>
<rect x="76" y="112" width="1" height="27" fill="#ffffff"/>
<rect x="76" y="138" width="27" height="1" fill="#b8b8b8"/>
<rect x="102" y="112" width="1" height="27" fill="#b8b8b8"/>
<rect x="103" y="112" width="27" height="1" fill="#ffffff"/>
<rect x="103" y="112" width="1" height="27" fill="#ffffff"/>
<rect x="103" y="138" width="27" height="1" fill="#b8b8b8"/>
<rect x="129" y="112" width="1" height="27" fill="#b8b8b8"/>
<rect x="130" y="112" width="27" height="1" fill="#ffffff"/>
<rect x="130" y="112" width="1" height="27" fill="#ffffff"/>
<rect x="130" y="138" width="27" height="1" fill="#b8b8b8"/>
<rect x="156" y="112" width="1" height="27" fill="#b8b8b8"/>
<rect x="171" y="112" width="27" height="1" fill="#ffffff"/>
<rect x="171" y="112" width="1" height="27" fill="#ffffff"/>
<rect x="171" y="138" width="27" height="1" fill="#b8b8b8"/>
<rect x="197" y="112" width="1" height="27" fill="#b8b8b8"/>
<rect x="198" y="112" width="27" height="1" fill="#ffffff"/>
<rect x="198" y="112" width="1" height="27" fill="#ffffff"/>
<rect x="198" y="138" width="27" height="1" fill="#b8b8b8"/>
<rect x="224" y="112" width="1" height="27" fill="#b8b8b8"/>
<rect x="239" y="112" width="27" height="1" fill="#ffffff"/>
<rect x="239" y="112" width="1" height="27" fill="#ffffff"/>
<rect x="239" y="138" width="27" height="1" fill="#b8b8b8"/>
<rect x="265" y="112" width="1" height="27" fill="#b8b8b8"/>
<rect x="280" y="112" width="27" height="1" fill="#ffffff"/>
<rect x="280" y="112" width="1" height="27" fill="#ffffff"/>
<rect x="280" y="138" width="27" height="1" fill="#b8b8b8"/>
<rect x="306" y="112" width="1" height="27" fill="#b8b8b8"/>
<rect x="307" y="112" width="27" height="1" fill="#ffffff"/>
<rect x="307" y="112" width="1" height="27" fill="#ffffff"/>
<rect x="307" y="138" width="27" height="1" fill="#b8b8b8"/>
<rect x="333" y="112" width="1" height="27" fill="#b8b8b8"/>
<rect x="334" y="112" width="27" height="1" fill="#ffffff"/>
<rect x="334" y="112" width="1" height="27" fill="#ffffff"/>
<rect x="334" y="138" width="27" height="1" fill="#b8b8b8"/>
<rect x="360" y="112" width="1" height="27" fill="#b8b8b8"/>
<rect x="361" y="112" width="27" height="1" fill="#ffffff"/>
<rect x="361" y="112" width="1" height="27" fill="#ffffff"/>
<rect x="361" y="138" width="27" height="1" fill="#b8b8b8"/>
<rect x="387" y="112" width="1" height="27" fill="#b8b8b8"/>
<path d="M26 125 H30 L31.5 121 L33 129 L34.5 120 L36 128 L37.5 123 L39 125 H45" fill="none" stroke="#555" stroke-width="0.9" />
<path d="M38.5 118.5 L33.5 130 M32 119 L36.5 130" fill="none" stroke="#000" stroke-width="1.1" />
<circle cx="32.5" cy="132" r="2" fill="none" stroke="#1c1cc0" stroke-width="1.2"/><circle cx="37" cy="132.5" r="2" fill="none" stroke="#1c1cc0" stroke-width="1.2"/>
<rect x="53.5" y="119.5" width="10" height="11" fill="#9a9a9a" stroke="#444" />
<path d="M55 125.0 h2 l1 -3 l1.5 6 l1.5 -5 l1.5 3 h0" fill="none" stroke="#222" stroke-width="0.9" />
<rect x="59.5" y="123.5" width="12" height="11" fill="#fff" stroke="#1c1cc0" />
<path d="M61 129.0 h2 l1 -3 l1.5 6 l1.5 -5 l1.5 3 h2" fill="none" stroke="#555" stroke-width="0.9" />
<rect x="81.5" y="120.5" width="13" height="13" fill="#e0cc78" stroke="#333" rx="1" />
<rect x="85" y="118.5" width="6" height="3.5" fill="#bbb" stroke="#333" rx="1" />
<path d="M83.5 125 h9 M83.5 127.5 h9" fill="none" stroke="#7a6a2a" stroke-width="0.8" />
<rect x="87.5" y="125.5" width="11" height="10" fill="#fff" stroke="#1c1cc0" />
<path d="M89 130.5 h2 l1 -3 l1.5 6 l1.5 -5 l1.5 3 h1" fill="none" stroke="#555" stroke-width="0.9" />
<path d="M106.5 125.5 H111.5 M122.5 125.5 H126" fill="none" stroke="#1c1cc0" stroke-width="1.1" />
<path d="M111.5 117.5 V132.5 M122.5 117.5 V132.5" fill="none" stroke="#1c1cc0" stroke-width="1.2" />
<path d="M113.2 125.5 V120.6 a1.1 1.1 0 0 1 2.2 0 V130.4 a1.1 1.1 0 0 0 2.2 0 V120.6 a1.1 1.1 0 0 1 2.2 0 V130.4 a1.1 1.1 0 0 0 2.2 0 V125.5" fill="none" stroke="#1c1cc0" stroke-width="0.95" />
<path d="M138.5 125.5 H147.5" fill="none" stroke="#1c1cc0" stroke-width="1.1" />
<path d="M138.5 117.5 V132.5 M147.5 117.5 V132.5" fill="none" stroke="#1c1cc0" stroke-width="1.2" />
<path d="M133 125.5 V120.6 a1.1 1.1 0 0 1 2.2 0 V130.4 a1.1 1.1 0 0 0 2.2 0 V125.5" fill="none" stroke="#1c1cc0" stroke-width="0.95" />
<path d="M148.8 125.5 V130.4 a1.1 1.1 0 0 0 2.2 0 V120.6 a1.1 1.1 0 0 1 2.2 0 V125.5" fill="none" stroke="#1c1cc0" stroke-width="0.95" />
<path d="M180.5 127 Q181.5 121 187 121.5 Q191.5 122.5 190.5 129.5" fill="none" stroke="#111" stroke-width="1.1" />
<path d="M177.5 123.5 L183 123.5 L180.5 129 Z" fill="#111" />
<path d="M215.5 127 Q214.5 121 209 121.5 Q204.5 122.5 205.5 129.5" fill="none" stroke="#8a8a8a" stroke-width="1.1" />
<path d="M218.5 123.5 L213 123.5 L215.5 129 Z" fill="#8a8a8a" />
<circle cx="252.5" cy="126" r="6" fill="#fff" stroke="#000" stroke-width="1.5"/>
<rect x="250.5" y="116" width="4" height="2.5" fill="#000" />
<rect x="252" y="117.5" width="1" height="3.0" fill="#000"/>
<path d="M252.5 126 L250 122.5 M252.5 126 L256 124" fill="none" stroke="#1c1cc0" stroke-width="1.3" />
<path d="M293.06 125.44 L287.06 131.44" fill="none" stroke="#000" stroke-width="2" />
<circle cx="296" cy="122.5" r="4.2" fill="#fff" stroke="#000" stroke-width="1.2"/>
<path d="M293.5 122.5 H298.5 M296 120 V125" fill="none" stroke="#1c1cc0" stroke-width="1.4" />
<path d="M320.06 125.44 L314.06 131.44" fill="none" stroke="#000" stroke-width="2" />
<circle cx="323" cy="122.5" r="4.2" fill="#fff" stroke="#000" stroke-width="1.2"/>
<path d="M320.5 122.5 H325.5" fill="none" stroke="#1c1cc0" stroke-width="1.4" />
<path d="M346.06 124.44 L340.06 130.44" fill="none" stroke="#000" stroke-width="2" />
<circle cx="349" cy="121.5" r="4.2" fill="#fff" stroke="#000" stroke-width="1.2"/>
<path d="M346 132.5 H357" fill="none" stroke="#1c1cc0" stroke-width="1.2" />
<path d="M345 132.5 l3 -2.5 v5 Z M358 132.5 l-3 -2.5 v5 Z" fill="#1c1cc0" />
<path d="M373.06 124.44 L367.06 130.44" fill="none" stroke="#000" stroke-width="2" />
<circle cx="376" cy="121.5" r="4.2" fill="#fff" stroke="#000" stroke-width="1.2"/>
<path d="M371 132.5 H385 M371.5 129.5 V135.5 M384.5 129.5 V135.5" fill="none" stroke="#1c1cc0" stroke-width="1.3" />
<rect x="388" y="113" width="1" height="26" fill="#a6a6a6"/>
<rect x="389" y="113" width="1" height="26" fill="#ffffff"/>
<rect x="390" y="113" width="1" height="26" fill="#ffffff"/>
<rect x="399" y="113" width="1" height="26" fill="#b0b0b0"/>
<rect x="393" y="117" width="5" height="1" fill="#ffffff"/>
<rect x="393" y="118" width="5" height="1" fill="#909090"/>
<rect x="393" y="121" width="5" height="1" fill="#ffffff"/>
<rect x="393" y="122" width="5" height="1" fill="#909090"/>
<rect x="393" y="125" width="5" height="1" fill="#ffffff"/>
<rect x="393" y="126" width="5" height="1" fill="#909090"/>
<rect x="393" y="129" width="5" height="1" fill="#ffffff"/>
<rect x="393" y="130" width="5" height="1" fill="#909090"/>
<rect x="393" y="133" width="5" height="1" fill="#ffffff"/>
<rect x="393" y="134" width="5" height="1" fill="#909090"/>
<rect x="400" y="112" width="27" height="1" fill="#ffffff"/>
<rect x="400" y="112" width="1" height="27" fill="#ffffff"/>
<rect x="400" y="138" width="27" height="1" fill="#b8b8b8"/>
<rect x="426" y="112" width="1" height="27" fill="#b8b8b8"/>
<path d="M406 118.5 L421 125.5 L406 132.5 Z" fill="#5ec65e" />
<rect x="432" y="129" width="93" height="1" fill="#a4a4a4"/>
<rect x="432" y="130" width="93" height="1" fill="#f8f8f8"/>
<rect x="436" y="125" width="1" height="4" fill="#a8a8a8"/>
<rect x="444" y="127" width="1" height="2" fill="#a8a8a8"/>
<rect x="451" y="127" width="1" height="2" fill="#a8a8a8"/>
<rect x="459" y="127" width="1" height="2" fill="#a8a8a8"/>
<rect x="467" y="127" width="1" height="2" fill="#a8a8a8"/>
<rect x="475" y="127" width="1" height="2" fill="#a8a8a8"/>
<rect x="482" y="127" width="1" height="2" fill="#a8a8a8"/>
<rect x="490" y="127" width="1" height="2" fill="#a8a8a8"/>
<rect x="498" y="127" width="1" height="2" fill="#a8a8a8"/>
<rect x="506" y="127" width="1" height="2" fill="#a8a8a8"/>
<rect x="513" y="127" width="1" height="2" fill="#a8a8a8"/>
<rect x="521" y="125" width="1" height="4" fill="#a8a8a8"/>
<path d="M456.5 123.5 Q456.5 121.5 458.5 121.5 H463.5 Q465.5 121.5 465.5 123.5 V131 L461 135.5 L456.5 131 Z" fill="#c9cdee" stroke="#40405a" stroke-width="1" />
<rect x="459" y="125" width="4" height="1" fill="#fff"/>
<rect x="459" y="127" width="4" height="1" fill="#fff"/>
<rect x="459" y="129" width="4" height="1" fill="#fff"/>
<text x="432.5" y="123" font-size="14" >-</text>
<text x="514.5" y="123" font-size="11" >+</text>
<rect x="10" y="141" width="1" height="26" fill="#ffffff"/>
<rect x="19" y="141" width="1" height="26" fill="#b0b0b0"/>
<rect x="13" y="145" width="5" height="1" fill="#ffffff"/>
<rect x="13" y="146" width="5" height="1" fill="#909090"/>
<rect x="13" y="149" width="5" height="1" fill="#ffffff"/>
<rect x="13" y="150" width="5" height="1" fill="#909090"/>
<rect x="13" y="153" width="5" height="1" fill="#ffffff"/>
<rect x="13" y="154" width="5" height="1" fill="#909090"/>
<rect x="13" y="157" width="5" height="1" fill="#ffffff"/>
<rect x="13" y="158" width="5" height="1" fill="#909090"/>
<rect x="13" y="161" width="5" height="1" fill="#ffffff"/>
<rect x="13" y="162" width="5" height="1" fill="#909090"/>
<rect x="22.5" y="143.5" width="105" height="20" fill="url(#gBtn)" stroke="#707070" rx="3" />
<rect x="23.5" y="144.5" width="103" height="18" fill="none" stroke="#fcfcfc" rx="2" opacity=".7"/>
<path d="M115.5 152.0 H122.5 L119 156.0 Z" fill="#000" />
<text x="25" y="157.5" font-size="11" textLength="22" lengthAdjust="spacingAndGlyphs" >MME</text>
<g transform="translate(133,147) scale(1.0)">
<path d="M0 4 H3 L7 0.5 V11.5 L3 8 H0 Z" fill="#111" />
<path d="M9 3.5 Q10.6 6 9 8.5 M11.2 1.8 Q14 6 11.2 10.2" fill="none" stroke="#111" stroke-width="1.1" />
</g>
<rect x="153.5" y="143.5" width="167" height="20" fill="url(#gBtn)" stroke="#707070" rx="3" />
<rect x="154.5" y="144.5" width="165" height="18" fill="none" stroke="#fcfcfc" rx="2" opacity=".7"/>
<path d="M308.5 152.0 H315.5 L312 156.0 Z" fill="#000" />
<text x="156" y="157.5" font-size="11" textLength="144.5" lengthAdjust="spacingAndGlyphs" >Reproduktory / sluchátka (IDT</text>
<g transform="translate(325,145) scale(1.0)">
<path d="M0.8 19.8 L10.5 9" fill="none" stroke="#111" stroke-width="1.5" />
<path d="M8.6 10.2 L11.4 12.6 L12.8 8.4 Z" fill="#222" />
<ellipse cx="14.6" cy="5.6" rx="4.6" ry="3.5" transform="rotate(-42 14.6 5.6)" fill="#a4a4a4" stroke="#111" stroke-width="1.1"/>
<path d="M12.2 3.8 L17 7.4 M13.6 2.6 L18 5.8 M11.6 5.6 L15.8 9" fill="none" stroke="#444" stroke-width="0.6" />
</g>
<rect x="347.5" y="143.5" width="166" height="20" fill="url(#gBtn)" stroke="#707070" rx="3" />
<rect x="348.5" y="144.5" width="164" height="18" fill="none" stroke="#fcfcfc" rx="2" opacity=".7"/>
<path d="M501.5 152.0 H508.5 L505 156.0 Z" fill="#000" />
<text x="350" y="157.5" font-size="11" textLength="147.8" lengthAdjust="spacingAndGlyphs" clip-path="url(#cl347_143)">Mikrofon (IDT High Definition A</text>
<rect x="516.5" y="143.5" width="107" height="20" fill="url(#gBtn)" stroke="#707070" rx="3" />
<rect x="517.5" y="144.5" width="105" height="18" fill="none" stroke="#fcfcfc" rx="2" opacity=".7"/>
<path d="M611.5 152.0 H618.5 L615 156.0 Z" fill="#000" />
<text x="519" y="157.5" font-size="11" textLength="111" lengthAdjust="spacingAndGlyphs" clip-path="url(#cl516_143)">1 (Mono) Input Channel</text>
<rect x="627" y="141" width="1" height="26" fill="#a6a6a6"/>
<rect x="628" y="141" width="1" height="26" fill="#ffffff"/>
<rect x="630" y="141" width="1" height="26" fill="#a6a6a6"/>
<rect x="10" y="168" width="1101" height="27" fill="#f0f0f0" />
<rect x="10" y="167" width="1101" height="1" fill="#a8a8a8"/>
<rect x="143" y="169" width="968" height="25" fill="#9797b0" />
<rect x="10" y="168" width="1101" height="1" fill="#ffffff"/>
<rect x="10" y="194" width="1101" height="2" fill="#000" />
<rect x="149" y="186.7" width="962" height="1.6" fill="#c8c8c8" />
<rect x="25" y="191" width="1" height="2" fill="#000"/>
<rect x="42" y="189" width="1" height="4" fill="#000"/>
<rect x="59" y="191" width="1" height="2" fill="#000"/>
<rect x="76" y="189" width="1" height="4" fill="#000"/>
<rect x="92" y="191" width="1" height="2" fill="#000"/>
<rect x="109" y="189" width="1" height="4" fill="#000"/>
<rect x="126" y="191" width="1" height="2" fill="#000"/>
<rect x="143" y="189" width="1" height="4" fill="#000"/>
<rect x="159" y="191" width="1" height="2" fill="#000"/>
<rect x="176" y="189" width="1" height="4" fill="#000"/>
<rect x="193" y="191" width="1" height="2" fill="#000"/>
<rect x="210" y="189" width="1" height="4" fill="#000"/>
<rect x="227" y="191" width="1" height="2" fill="#000"/>
<rect x="243" y="189" width="1" height="4" fill="#000"/>
<rect x="260" y="191" width="1" height="2" fill="#000"/>
<rect x="277" y="189" width="1" height="4" fill="#000"/>
<rect x="294" y="191" width="1" height="2" fill="#000"/>
<rect x="310" y="189" width="1" height="4" fill="#000"/>
<rect x="327" y="191" width="1" height="2" fill="#000"/>
<rect x="344" y="189" width="1" height="4" fill="#000"/>
<rect x="361" y="191" width="1" height="2" fill="#000"/>
<rect x="378" y="189" width="1" height="4" fill="#000"/>
<rect x="394" y="191" width="1" height="2" fill="#000"/>
<rect x="411" y="189" width="1" height="4" fill="#000"/>
<rect x="428" y="191" width="1" height="2" fill="#000"/>
<rect x="445" y="189" width="1" height="4" fill="#000"/>
<rect x="461" y="191" width="1" height="2" fill="#000"/>
<rect x="478" y="189" width="1" height="4" fill="#000"/>
<rect x="495" y="191" width="1" height="2" fill="#000"/>
<rect x="512" y="189" width="1" height="4" fill="#000"/>
<rect x="529" y="191" width="1" height="2" fill="#000"/>
<rect x="545" y="189" width="1" height="4" fill="#000"/>
<rect x="562" y="191" width="1" height="2" fill="#000"/>
<rect x="579" y="189" width="1" height="4" fill="#000"/>
<rect x="596" y="191" width="1" height="2" fill="#000"/>
<rect x="612" y="189" width="1" height="4" fill="#000"/>
<rect x="629" y="191" width="1" height="2" fill="#000"/>
<rect x="646" y="189" width="1" height="4" fill="#000"/>
<rect x="663" y="191" width="1" height="2" fill="#000"/>
<rect x="680" y="189" width="1" height="4" fill="#000"/>
<rect x="696" y="191" width="1" height="2" fill="#000"/>
<rect x="713" y="189" width="1" height="4" fill="#000"/>
<rect x="730" y="191" width="1" height="2" fill="#000"/>
<rect x="747" y="189" width="1" height="4" fill="#000"/>
<rect x="763" y="191" width="1" height="2" fill="#000"/>
<rect x="780" y="189" width="1" height="4" fill="#000"/>
<rect x="797" y="191" width="1" height="2" fill="#000"/>
<rect x="814" y="189" width="1" height="4" fill="#000"/>
<rect x="830" y="191" width="1" height="2" fill="#000"/>
<rect x="847" y="189" width="1" height="4" fill="#000"/>
<rect x="864" y="191" width="1" height="2" fill="#000"/>
<rect x="881" y="189" width="1" height="4" fill="#000"/>
<rect x="898" y="191" width="1" height="2" fill="#000"/>
<rect x="914" y="189" width="1" height="4" fill="#000"/>
<rect x="931" y="191" width="1" height="2" fill="#000"/>
<rect x="948" y="189" width="1" height="4" fill="#000"/>
<rect x="965" y="191" width="1" height="2" fill="#000"/>
<rect x="981" y="189" width="1" height="4" fill="#000"/>
<rect x="998" y="191" width="1" height="2" fill="#000"/>
<rect x="1015" y="189" width="1" height="4" fill="#000"/>
<rect x="1032" y="191" width="1" height="2" fill="#000"/>
<rect x="1049" y="189" width="1" height="4" fill="#000"/>
<rect x="1065" y="191" width="1" height="2" fill="#000"/>
<rect x="1082" y="189" width="1" height="4" fill="#000"/>
<rect x="1099" y="191" width="1" height="2" fill="#000"/>
<text x="144.7" y="186" font-size="12" font-weight="bold" text-anchor="middle" textLength="22.5" lengthAdjust="spacingAndGlyphs" >0,00</text>
<text x="178.25" y="186" font-size="12" font-weight="bold" text-anchor="middle" textLength="22.5" lengthAdjust="spacingAndGlyphs" >0.10</text>
<text x="211.8" y="186" font-size="12" font-weight="bold" text-anchor="middle" textLength="22.5" lengthAdjust="spacingAndGlyphs" >0.20</text>
<text x="245.34999999999997" y="186" font-size="12" font-weight="bold" text-anchor="middle" textLength="22.5" lengthAdjust="spacingAndGlyphs" >0.30</text>
<text x="278.9" y="186" font-size="12" font-weight="bold" text-anchor="middle" textLength="22.5" lengthAdjust="spacingAndGlyphs" >0.40</text>
<text x="312.45" y="186" font-size="12" font-weight="bold" text-anchor="middle" textLength="22.5" lengthAdjust="spacingAndGlyphs" >0.50</text>
<text x="346.0" y="186" font-size="12" font-weight="bold" text-anchor="middle" textLength="22.5" lengthAdjust="spacingAndGlyphs" >0.60</text>
<text x="379.54999999999995" y="186" font-size="12" font-weight="bold" text-anchor="middle" textLength="22.5" lengthAdjust="spacingAndGlyphs" >0.70</text>
<text x="413.1" y="186" font-size="12" font-weight="bold" text-anchor="middle" textLength="22.5" lengthAdjust="spacingAndGlyphs" >0.80</text>
<text x="446.65" y="186" font-size="12" font-weight="bold" text-anchor="middle" textLength="22.5" lengthAdjust="spacingAndGlyphs" >0.90</text>
<text x="480.2" y="186" font-size="12" font-weight="bold" text-anchor="middle" textLength="22.5" lengthAdjust="spacingAndGlyphs" >1.00</text>
<text x="513.75" y="186" font-size="12" font-weight="bold" text-anchor="middle" textLength="22.5" lengthAdjust="spacingAndGlyphs" >1.10</text>
<text x="547.3" y="186" font-size="12" font-weight="bold" text-anchor="middle" textLength="22.5" lengthAdjust="spacingAndGlyphs" >1.20</text>
<text x="580.85" y="186" font-size="12" font-weight="bold" text-anchor="middle" textLength="22.5" lengthAdjust="spacingAndGlyphs" >1.30</text>
<text x="614.4" y="186" font-size="12" font-weight="bold" text-anchor="middle" textLength="22.5" lengthAdjust="spacingAndGlyphs" >1.40</text>
<text x="647.95" y="186" font-size="12" font-weight="bold" text-anchor="middle" textLength="22.5" lengthAdjust="spacingAndGlyphs" >1.50</text>
<text x="681.5" y="186" font-size="12" font-weight="bold" text-anchor="middle" textLength="22.5" lengthAdjust="spacingAndGlyphs" >1.60</text>
<text x="715.05" y="186" font-size="12" font-weight="bold" text-anchor="middle" textLength="22.5" lengthAdjust="spacingAndGlyphs" >1.70</text>
<text x="748.5999999999999" y="186" font-size="12" font-weight="bold" text-anchor="middle" textLength="22.5" lengthAdjust="spacingAndGlyphs" >1.80</text>
<text x="782.1499999999999" y="186" font-size="12" font-weight="bold" text-anchor="middle" textLength="22.5" lengthAdjust="spacingAndGlyphs" >1.90</text>
<text x="815.7" y="186" font-size="12" font-weight="bold" text-anchor="middle" textLength="22.5" lengthAdjust="spacingAndGlyphs" >2.00</text>
<text x="849.25" y="186" font-size="12" font-weight="bold" text-anchor="middle" textLength="22.5" lengthAdjust="spacingAndGlyphs" >2.10</text>
<text x="882.8" y="186" font-size="12" font-weight="bold" text-anchor="middle" textLength="22.5" lengthAdjust="spacingAndGlyphs" >2.20</text>
<text x="916.3499999999999" y="186" font-size="12" font-weight="bold" text-anchor="middle" textLength="22.5" lengthAdjust="spacingAndGlyphs" >2.30</text>
<text x="949.8999999999999" y="186" font-size="12" font-weight="bold" text-anchor="middle" textLength="22.5" lengthAdjust="spacingAndGlyphs" >2.40</text>
<text x="983.45" y="186" font-size="12" font-weight="bold" text-anchor="middle" textLength="22.5" lengthAdjust="spacingAndGlyphs" >2.50</text>
<text x="1017.0" y="186" font-size="12" font-weight="bold" text-anchor="middle" textLength="22.5" lengthAdjust="spacingAndGlyphs" >2.60</text>
<text x="1050.55" y="186" font-size="12" font-weight="bold" text-anchor="middle" textLength="22.5" lengthAdjust="spacingAndGlyphs" >2.70</text>
<text x="1084.1" y="186" font-size="12" font-weight="bold" text-anchor="middle" textLength="22.5" lengthAdjust="spacingAndGlyphs" >2.80</text>
<text x="43.55" y="186" font-size="12" font-weight="bold" text-anchor="middle" textLength="30" lengthAdjust="spacingAndGlyphs" >- 0,30</text>
<path d="M149.5 182.5 L144 187.8 L149.5 193 Z" fill="#cacaca" stroke="#8e8e8e" stroke-width="0.8" />
<rect x="10" y="196" width="1084" height="403" fill="#a0a0a0" />
<rect x="14" y="200" width="1076" height="146" fill="#000" />
<rect x="15" y="201" width="95" height="143" fill="#cacadb" />
<rect x="111" y="201" width="30" height="143" fill="#cacadb" />
<rect x="141" y="201" width="947" height="143" fill="#9797b0" />
<rect x="111" y="201" width="1" height="143" fill="#f4f4fa"/>
<rect x="15" y="201" width="95" height="1" fill="#f4f4fa"/>
<rect x="15" y="201" width="1" height="14" fill="#f4f4fa"/>
<rect x="15" y="215" width="95" height="1" fill="#85858f"/>
<rect x="15" y="216" width="95" height="1" fill="#f4f4fa"/>
<rect x="29" y="201" width="1" height="14" fill="#85858f"/>
<rect x="30" y="201" width="1" height="14" fill="#f4f4fa"/>
<path d="M19 204.5 L26 211.5 M26 204.5 L19 211.5" fill="none" stroke="#000" stroke-width="1.6" />
<text x="33" y="212.2" font-size="12" textLength="56" lengthAdjust="spacingAndGlyphs" >sound_for_</text>
<path d="M95 205 H106 L100.5 211 Z" fill="#000" />
<text x="19" y="229" font-size="11" textLength="74" lengthAdjust="spacingAndGlyphs" >Mono, 22050Hz</text>
<text x="19" y="245" font-size="11" textLength="51" lengthAdjust="spacingAndGlyphs" >32-bit float</text>
<rect x="15" y="250" width="95" height="1" fill="#85858f"/>
<rect x="16" y="251" width="46" height="14" fill="#cfcfe0" />
<rect x="16" y="251" width="46" height="1" fill="#ffffff"/>
<rect x="16" y="251" width="1" height="14" fill="#ffffff"/>
<rect x="16" y="264" width="46" height="1" fill="#77778a"/>
<rect x="61" y="251" width="1" height="14" fill="#77778a"/>
<text x="37.5" y="262" font-size="11" text-anchor="middle" textLength="22" lengthAdjust="spacingAndGlyphs" >Mute</text>
<rect x="63" y="251" width="47" height="14" fill="#cfcfe0" />
<rect x="63" y="251" width="47" height="1" fill="#ffffff"/>
<rect x="63" y="251" width="1" height="14" fill="#ffffff"/>
<rect x="63" y="264" width="47" height="1" fill="#77778a"/>
<rect x="109" y="251" width="1" height="14" fill="#77778a"/>
<text x="85.5" y="262" font-size="11" text-anchor="middle" textLength="20.5" lengthAdjust="spacingAndGlyphs" >Solo</text>
<rect x="15" y="266" width="95" height="1" fill="#85858f"/>
<rect x="26" y="287" width="76" height="1" fill="#9c9ca8"/>
<rect x="27" y="282" width="1" height="5" fill="#f0f0f6"/>
<rect x="34" y="284" width="1" height="3" fill="#f0f0f6"/>
<rect x="42" y="284" width="1" height="3" fill="#f0f0f6"/>
<rect x="49" y="284" width="1" height="3" fill="#f0f0f6"/>
<rect x="56" y="284" width="1" height="3" fill="#f0f0f6"/>
<rect x="64" y="284" width="1" height="3" fill="#f0f0f6"/>
<rect x="71" y="284" width="1" height="3" fill="#f0f0f6"/>
<rect x="78" y="284" width="1" height="3" fill="#f0f0f6"/>
<rect x="85" y="284" width="1" height="3" fill="#f0f0f6"/>
<rect x="93" y="284" width="1" height="3" fill="#f0f0f6"/>
<rect x="100" y="282" width="1" height="5" fill="#f0f0f6"/>
<path d="M59.0 281.5 Q59.0 279.5 61.0 279.5 H66.0 Q68.0 279.5 68.0 281.5 V288.5 L63.5 293 L59.0 288.5 Z" fill="#c9cdee" stroke="#30304a" stroke-width="1" />
<rect x="61.5" y="283" width="4.0" height="1" fill="#fff"/>
<rect x="61.5" y="285" width="4.0" height="1" fill="#fff"/>
<rect x="61.5" y="287" width="4.0" height="1" fill="#fff"/>
<text x="25.5" y="281" font-size="14" >-</text>
<text x="93.5" y="281" font-size="11" >+</text>
<rect x="26" y="317" width="76" height="1" fill="#9c9ca8"/>
<rect x="27" y="312" width="1" height="5" fill="#f0f0f6"/>
<rect x="34" y="314" width="1" height="3" fill="#f0f0f6"/>
<rect x="42" y="314" width="1" height="3" fill="#f0f0f6"/>
<rect x="49" y="314" width="1" height="3" fill="#f0f0f6"/>
<rect x="56" y="314" width="1" height="3" fill="#f0f0f6"/>
<rect x="64" y="314" width="1" height="3" fill="#f0f0f6"/>
<rect x="71" y="314" width="1" height="3" fill="#f0f0f6"/>
<rect x="78" y="314" width="1" height="3" fill="#f0f0f6"/>
<rect x="85" y="314" width="1" height="3" fill="#f0f0f6"/>
<rect x="93" y="314" width="1" height="3" fill="#f0f0f6"/>
<rect x="100" y="312" width="1" height="5" fill="#f0f0f6"/>
<path d="M59.0 311.5 Q59.0 309.5 61.0 309.5 H66.0 Q68.0 309.5 68.0 311.5 V318.5 L63.5 323 L59.0 318.5 Z" fill="#c9cdee" stroke="#30304a" stroke-width="1" />
<rect x="61.5" y="313" width="4.0" height="1" fill="#fff"/>
<rect x="61.5" y="315" width="4.0" height="1" fill="#fff"/>
<rect x="61.5" y="317" width="4.0" height="1" fill="#fff"/>
<text x="26" y="309" font-size="10" fill="#222" >L</text>
<text x="92.5" y="309" font-size="10" fill="#222" >R</text>
<rect x="34" y="327" width="61" height="17" fill="#d2d2e2" />
<rect x="34" y="327" width="61" height="1" fill="#ffffff"/>
<rect x="34" y="327" width="1" height="17" fill="#ffffff"/>
<rect x="94" y="327" width="1" height="17" fill="#77778a"/>
<path d="M59.5 339.5 L64.5 334.5 L69.5 339.5 Z" fill="#b0b0c4" stroke="#222" stroke-width="1" />
<text x="137" y="213" font-size="12" font-weight="bold" text-anchor="end" >1,0</text>
<text x="140" y="242" font-size="12" fill="#111" text-anchor="end" >0,5-</text>
<text x="140" y="277" font-size="12" font-weight="bold" text-anchor="end" >0,0-</text>
<text x="140" y="312.5" font-size="12" fill="#111" text-anchor="end" >-0,5-</text>
<text x="136" y="339.5" font-size="12" font-weight="bold" text-anchor="end" >-1,0</text>
<path d="M141 272v1M142 272v1M143 272v1M144 272v1M145 272v1M146 272v1M147 272v1M148 272v1M149 272v1M150 272v1M151 272v1M152 272v1M153 272v1M154 272v1M155 272v1M156 272v1M157 272v1M158 272v1M159 272v1M160 272v1M161 272v1M162 272v1M163 272v1M164 272v1M165 272v1M166 272v1M167 272v1M168 272v1M169 272v1M170 272v1M171 272v1M172 272v1M173 272v1M174 272v1M175 272v1M176 272v1M177 272v1M178 272v1M179 272v1M180 269v6M181 263v17M182 261v24M183 249v41M184 243v50M185 255v43M186 245v65M187 237v79M188 222v103M189 232v82M190 247v64M191 236v72M192 237v61M193 247v52M194 235v74M195 235v71M196 248v45M197 247v52M198 240v67M199 238v71M200 245v58M201 249v49M202 240v67M203 218v110M204 231v84M205 234v80M206 230v82M207 240v65M208 249v54M209 238v67M210 240v63M211 253v48M212 255v43M213 256v34M214 258v29M215 261v27M216 261v24M217 261v19M218 264v18M219 266v15M220 267v12M221 267v12M222 263v17M223 263v19M224 255v39M225 248v48M226 249v45M227 254v36M228 253v37M229 256v33M230 249v41M231 250v45M232 255v37M233 253v39M234 251v41M235 254v39M236 254v37M237 252v38M238 253v40M239 256v34M240 252v40M241 253v41M242 255v37M243 253v37M244 251v44M245 255v38M246 256v36M247 251v45M248 240v67M249 249v50M250 249v48M251 245v58M252 237v63M253 241v56M254 249v45M255 246v59M256 229v84M257 229v73M258 244v53M259 252v42M260 242v62M261 223v88M262 224v86M263 243v65M264 211v125M265 221v104M266 227v90M267 235v79M268 245v64M269 243v58M270 217v103M271 212v123M272 227v93M273 246v63M274 242v68M275 242v58M276 249v46M277 244v59M278 245v68M279 232v85M280 230v80M281 245v67M282 241v74M283 210v126M284 214v117M285 228v90M286 208v130M287 221v104M288 219v107M289 219v107M290 242v62M291 208v130M292 224v98M293 217v102M294 230v72M295 236v72M296 228v89M297 239v72M298 232v72M299 229v75M300 243v63M301 249v52M302 248v52M303 228v69M304 229v80M305 249v52M306 240v63M307 235v58M308 239v56M309 254v39M310 254v40M311 255v35M312 255v35M313 255v35M314 255v39M315 248v45M316 251v42M317 255v41M318 255v44M319 239v64M320 240v63M321 255v39M322 255v36M323 245v50M324 246v51M325 255v36M326 255v35M327 255v35M328 255v35M329 255v35M330 255v35M331 255v36M332 255v35M333 255v35M334 254v37M335 254v42M336 249v51M337 248v43M338 254v37M339 254v38M340 253v40M341 254v37M342 254v39M343 245v54M344 241v56M345 245v47M346 254v40M347 253v42M348 254v37M349 254v37M350 254v37M351 246v57M352 244v61M353 249v47M354 254v37M355 253v42M356 240v62M357 240v58M358 248v44M359 244v51M360 250v48M361 234v72M362 233v69M363 253v39M364 253v39M365 247v58M366 247v58M367 253v44M368 251v49M369 244v55M370 246v52M371 253v52M372 245v62M373 241v55M374 245v50M375 243v63M376 243v66M377 253v49M378 246v55M379 242v62M380 245v57M381 252v53M382 252v51M383 244v51M384 244v50M385 252v48M386 237v71M387 236v65M388 251v42M389 243v54M390 228v91M391 228v91M392 252v42M393 246v47M394 233v74M395 233v80M396 232v77M397 230v66M398 237v67M399 252v49M400 240v65M401 238v57M402 245v48M403 252v44M404 245v65M405 231v83M406 234v61M407 252v41M408 252v43M409 241v61M410 227v77M411 227v77M412 252v53M413 251v54M414 245v60M415 245v61M416 252v44M417 252v41M418 237v62M419 234v75M420 240v66M421 240v65M422 240v68M423 252v49M424 252v45M425 245v63M426 245v60M427 252v41M428 252v41M429 238v67M430 239v69M431 252v42M432 248v45M433 233v69M434 233v81M435 248v59M436 234v71M437 234v73M438 252v43M439 252v41M440 246v47M441 237v69M442 241v68M443 252v48M444 241v66M445 237v71M446 247v52M447 252v49M448 252v49M449 241v61M450 241v63M451 250v47M452 252v42M453 252v44M454 246v48M455 246v47M456 248v46M457 235v71M458 234v70M459 251v42M460 240v64M461 231v83M462 241v68M463 252v41M464 244v65M465 240v71M466 251v47M467 252v41M468 245v60M469 235v74M470 235v69M471 250v50M472 247v53M473 239v66M474 238v71M475 246v59M476 244v56M477 249v54M478 244v62M479 237v68M480 239v65M481 241v58M482 227v80M483 226v85M484 246v53M485 243v50M486 242v62M487 252v57M488 252v57M489 252v47M490 234v83M491 234v81M492 250v43M493 226v80M494 224v90M495 241v65M496 252v41M497 246v47M498 239v67M499 239v73M500 252v53M501 246v48M502 241v67M503 244v67M504 242v67M505 227v77M506 227v78M507 243v61M508 241v64M509 251v42M510 242v57M511 242v65M512 252v52M513 252v46M514 252v41M515 242v64M516 242v64M517 246v53M518 240v66M519 242v66M520 252v49M521 252v41M522 248v46M523 236v70M524 241v64M525 252v41M526 252v41M527 252v48M528 246v58M529 246v52M530 252v41M531 238v60M532 231v82M533 235v79M534 252v49M535 246v55M536 240v71M537 242v64M538 252v48M539 252v48M540 238v66M541 234v72M542 240v56M543 243v58M544 244v57M545 252v41M546 246v55M547 236v70M548 239v54M549 252v41M550 252v46M551 244v58M552 244v52M553 252v41M554 243v60M555 246v58M556 243v58M557 237v69M558 244v58M559 252v41M560 252v41M561 247v52M562 243v61M563 252v45M564 252v41M565 252v42M566 250v47M567 250v43M568 240v53M569 240v63M570 252v47M571 239v63M572 235v70M573 242v60M574 252v41M575 247v51M576 237v65M577 242v56M578 252v49M579 252v50M580 236v66M581 233v76M582 247v60M583 252v52M584 243v59M585 243v60M586 242v61M587 238v72M588 244v63M589 252v44M590 252v54M591 245v64M592 245v57M593 243v64M594 232v79M595 233v68M596 237v68M597 233v83M598 239v74M599 252v46M600 242v60M601 228v85M602 230v78M603 249v44M604 242v62M605 244v59M606 252v41M607 237v56M608 237v64M609 251v47M610 245v54M611 245v48M612 248v52M613 234v79M614 234v79M615 243v53M616 230v67M617 230v80M618 244v61M619 233v72M620 232v70M621 246v57M622 228v83M623 228v77M624 240v53M625 229v80M626 223v98M627 232v85M628 251v50M629 229v86M630 229v83M631 244v52M632 253v40M633 241v69M634 238v74M635 242v62M636 253v47M637 240v67M638 238v62M639 248v44M640 253v39M641 250v53M642 228v85M643 228v88M644 243v68M645 239v68M646 236v77M647 242v67M648 227v79M649 227v81M650 243v67M651 237v75M652 237v67M653 253v39M654 249v52M655 231v81M656 227v84M657 233v70M658 246v58M659 241v65M660 246v53M661 253v49M662 237v72M663 233v73M664 244v48M665 252v41M666 234v75M667 228v84M668 234v64M669 251v48M670 251v53M671 234v77M672 229v82M673 234v80M674 229v86M675 229v76M676 249v44M677 237v72M678 237v75M679 248v55M680 253v39M681 239v70M682 240v71M683 253v45M684 253v39M685 253v48M686 232v82M687 232v79M688 253v46M689 240v66M690 240v61M691 253v39M692 252v43M693 243v59M694 243v58M695 253v39M696 253v39M697 249v56M698 233v81M699 233v74M700 246v55M701 240v64M702 242v58M703 253v42M704 242v58M705 242v51M706 243v58M707 231v80M708 231v80M709 249v49M710 234v73M711 233v72M712 244v52M713 253v45M714 238v67M715 238v63M716 252v40M717 253v50M718 248v58M719 230v78M720 230v68M721 241v62M722 234v73M723 235v67M724 237v61M725 236v74M726 248v59M727 228v83M728 228v85M729 241v66M730 253v39M731 247v45M732 242v60M733 249v61M734 241v72M735 242v64M736 253v48M737 253v41M738 242v64M739 224v91M740 224v82M741 236v65M742 222v95M743 223v96M744 247v58M745 231v79M746 231v79M747 249v58M748 245v67M749 225v91M750 225v90M751 244v63M752 253v52M753 246v70M754 238v75M755 240v73M756 253v58M757 253v43M758 248v44M759 236v56M760 236v74M761 253v55M762 243v61M763 232v85M764 232v84M765 246v57M766 236v77M767 230v85M768 234v71M769 223v83M770 223v98M771 252v59M772 231v79M773 231v84M774 241v73M775 235v80M776 241v60M777 253v61M778 253v61M779 233v72M780 225v77M781 230v83M782 253v58M783 253v56M784 235v66M785 227v78M786 234v73M787 232v76M788 232v70M789 229v75M790 226v90M791 235v77M792 251v48M793 233v82M794 234v81M795 245v53M796 253v39M797 253v46M798 237v69M799 237v64M800 249v57M801 242v67M802 242v60M803 253v45M804 247v50M805 247v45M806 253v39M807 253v41M808 245v54M809 243v57M810 248v53M811 253v41M812 244v60M813 238v69M814 240v60M815 246v58M816 246v58M817 253v41M818 253v39M819 253v39M820 249v49M821 249v50M822 249v47M823 247v58M824 253v50M825 245v54M826 243v57M827 248v46M828 253v42M829 248v52M830 248v51M831 249v52M832 249v49M833 253v50M834 253v50M835 245v54M836 245v59M837 242v64M838 239v64M839 247v52M840 241v60M841 241v57M842 253v41M843 247v55M844 247v54M845 253v39M846 234v65M847 234v73M848 247v55M849 238v64M850 238v58M851 252v44M852 253v40M853 252v40M854 247v45M855 248v48M856 253v46M857 253v46M858 248v56M859 244v62M860 249v47M861 254v42M862 248v53M863 245v53M864 248v49M865 254v42M866 247v51M867 235v71M868 235v71M869 254v37M870 251v40M871 245v53M872 249v52M873 254v43M874 253v38M875 233v66M876 233v75M877 249v55M878 248v55M879 254v37M880 254v39M881 254v47M882 244v59M883 244v55M884 254v40M885 245v49M886 233v61M887 237v71M888 238v71M889 238v64M890 247v43M891 233v70M892 232v79M893 240v67M894 236v73M895 241v70M896 256v43M897 256v45M898 248v57M899 246v54M900 244v50M901 237v75M902 240v68M903 256v34M904 257v31M905 252v46M906 239v66M907 240v61M908 257v31M909 253v47M910 244v63M911 244v60M912 242v55M913 228v90M914 238v70M915 237v68M916 238v60M917 251v41M918 257v42M919 236v75M920 232v79M921 242v56M922 242v59M923 241v61M924 238v60M925 234v77M926 241v67M927 230v72M928 230v83M929 226v94M930 236v75M931 240v62M932 255v42M933 252v44M934 243v50M935 243v55M936 257v45M937 257v45M938 252v42M939 249v39M940 252v40M941 257v39M942 248v52M943 245v55M944 249v54M945 241v63M946 240v70M947 244v64M948 233v67M949 232v63M950 250v46M951 244v63M952 250v55M953 257v35M954 246v48M955 242v70M956 247v63M957 226v95M958 235v76M959 228v69M960 229v81M961 251v51M962 239v62M963 238v51M964 248v43M965 246v54M966 239v65M967 240v59M968 252v36M969 241v58M970 240v65M971 242v62M972 235v66M973 240v57M974 257v48M975 257v47M976 238v62M977 232v64M978 241v67M979 237v75M980 233v74M981 240v49M982 234v63M983 237v73M984 257v52M985 247v57M986 230v68M987 229v66M988 239v70M989 254v58M990 232v81M991 220v85M992 227v89M993 242v81M994 206v134M995 222v102M996 228v91M997 226v89M998 237v64M999 254v51M1000 255v48M1001 237v71M1002 239v67M1003 256v34M1004 251v41M1005 249v55M1006 256v46M1007 257v32M1008 251v52M1009 248v58M1010 250v50M1011 255v49M1012 240v70M1013 239v56M1014 247v41M1015 240v60M1016 240v65M1017 251v49M1018 234v66M1019 235v71M1020 264v30M1021 258v30M1022 260v22M1023 262v21M1024 261v25M1025 252v36M1026 248v50M1027 248v53M1028 241v59M1029 244v51M1030 244v63M1031 232v84M1032 234v77M1033 253v40M1034 232v84M1035 228v92M1036 238v71M1037 210v126M1038 222v103M1039 213v112M1040 217v108M1041 205v137M1042 219v109M1043 210v108M1044 213v99M1045 235v86M1046 252v65M1047 245v59M1048 228v86M1049 230v80M1050 235v73M1051 229v81M1052 234v69M1053 234v70M1054 236v69M1055 256v35M1056 240v52M1057 236v66M1058 243v63M1059 246v57M1060 246v46M1061 255v40M1062 256v39M1063 244v55M1064 231v67M1065 233v64M1066 256v38M1067 240v63M1068 232v72M1069 235v60M1070 252v39M1071 235v76M1072 232v80M1073 243v58M1074 240v67M1075 240v64M1076 248v41M1077 256v33M1078 248v59M1079 231v85M1080 229v80M1081 216v114M1082 230v86M1083 235v74M1084 256v42M1085 241v54M1086 241v61M1087 250v50" fill="none" stroke="#3737c8" stroke-width="1.0" transform="translate(.5 0)" shape-rendering="crispEdges"/>
<path d="M180 270v5M181 268v10M182 265v15M183 262v20M184 263v19M185 262v22M186 261v24M187 261v22M188 261v22M189 260v24M190 260v25M191 261v23M192 261v23M193 261v23M194 261v23M195 260v25M196 261v23M197 260v25M198 260v25M199 261v23M200 260v25M201 261v23M202 260v25M203 261v23M204 260v24M205 261v24M206 260v24M207 260v25M208 260v25M209 261v22M210 261v23M211 261v23M212 263v20M213 263v19M214 264v16M215 265v15M216 267v12M217 267v11M218 268v9M219 268v9M220 268v9M221 268v9M222 268v9M223 268v9M224 262v20M225 260v24M226 261v23M227 260v25M228 261v23M229 261v24M230 261v24M231 260v24M232 261v23M233 260v26M234 260v26M235 261v24M236 259v26M237 261v23M238 261v23M239 260v26M240 261v24M241 261v24M242 261v23M243 260v24M244 261v23M245 260v25M246 261v23M247 260v25M248 258v28M249 258v29M250 258v29M251 258v29M252 255v34M253 257v31M254 256v34M255 255v34M256 254v37M257 254v37M258 253v40M259 252v40M260 253v40M261 253v39M262 252v40M263 251v42M264 252v41M265 252v41M266 251v42M267 253v39M268 252v42M269 252v41M270 253v39M271 252v41M272 254v38M273 254v37M274 251v42M275 251v43M276 253v40M277 253v39M278 253v38M279 251v42M280 253v39M281 252v41M282 252v42M283 253v40M284 251v43M285 253v39M286 252v42M287 253v38M288 253v40M289 252v41M290 253v39M291 252v42M292 251v42M293 253v39M294 253v40M295 254v37M296 253v39M297 252v41M298 253v38M299 251v43M300 253v38M301 253v40M302 254v37M303 253v38M304 252v41M305 253v38M306 253v39M307 254v38M308 255v34M309 257v32M310 256v33M311 255v34M312 257v32M313 257v31M314 255v35M315 255v35M316 256v33M317 256v32M318 256v34M319 254v36M320 256v32M321 255v35M322 256v33M323 255v34M324 256v34M325 255v34M326 256v32M327 255v36M328 254v36M329 256v34M330 256v34M331 255v35M332 256v33M333 256v32M334 255v35M335 255v35M336 255v35M337 256v32M338 254v36M339 255v36M340 256v33M341 255v36M342 254v37M343 256v34M344 254v37M345 254v38M346 254v37M347 255v35M348 255v35M349 255v35M350 254v37M351 255v34M352 254v36M353 254v36M354 253v38M355 253v38M356 254v36M357 254v37M358 254v37M359 254v37M360 255v35M361 255v35M362 254v37M363 254v37M364 255v36M365 254v36M366 255v35M367 254v37M368 255v35M369 255v35M370 253v39M371 255v35M372 253v39M373 254v38M374 254v36M375 253v38M376 253v38M377 252v40M378 252v41M379 253v38M380 254v38M381 253v39M382 254v36M383 253v39M384 254v36M385 254v37M386 252v40M387 252v40M388 253v39M389 252v42M390 254v37M391 253v38M392 253v40M393 253v39M394 252v40M395 254v37M396 252v41M397 254v38M398 253v39M399 253v38M400 252v41M401 254v37M402 251v43M403 253v39M404 253v38M405 253v39M406 253v40M407 253v38M408 252v41M409 252v41M410 252v41M411 251v42M412 252v41M413 254v38M414 253v39M415 253v40M416 253v39M417 253v39M418 253v40M419 252v41M420 252v40M421 252v42M422 252v40M423 254v37M424 251v43M425 254v38M426 253v39M427 254v37M428 253v40M429 252v41M430 253v39M431 251v42M432 254v38M433 251v42M434 252v41M435 254v38M436 254v37M437 254v37M438 252v40M439 253v38M440 251v42M441 254v38M442 252v41M443 253v39M444 254v37M445 252v41M446 252v40M447 253v38M448 253v39M449 254v38M450 254v38M451 253v40M452 253v40M453 254v38M454 253v38M455 251v42M456 253v39M457 253v39M458 254v38M459 254v37M460 252v40M461 253v38M462 252v41M463 254v38M464 253v39M465 252v40M466 252v41M467 253v39M468 252v41M469 253v40M470 252v41M471 252v41M472 252v41M473 253v38M474 254v37M475 254v37M476 253v38M477 253v39M478 253v38M479 254v37M480 253v39M481 253v38M482 254v37M483 252v41M484 253v39M485 254v38M486 253v38M487 253v40M488 254v37M489 253v39M490 252v41M491 254v37M492 253v39M493 252v41M494 252v40M495 253v39M496 254v37M497 252v42M498 252v42M499 252v41M500 254v38M501 253v40M502 252v41M503 253v39M504 252v42M505 253v40M506 254v36M507 254v38M508 252v42M509 252v42M510 252v41M511 254v37M512 254v38M513 253v40M514 254v37M515 252v41M516 253v39M517 252v40M518 253v40M519 253v38M520 252v41M521 254v38M522 253v39M523 253v39M524 252v40M525 252v40M526 253v39M527 253v38M528 254v37M529 254v36M530 253v39M531 254v36M532 253v38M533 252v41M534 253v40M535 253v38M536 252v41M537 252v42M538 252v40M539 254v38M540 252v41M541 252v40M542 253v40M543 253v39M544 254v38M545 254v38M546 253v39M547 253v39M548 253v39M549 252v40M550 254v37M551 254v37M552 254v37M553 253v39M554 254v36M555 254v38M556 254v37M557 254v36M558 252v41M559 254v38M560 252v41M561 253v39M562 252v41M563 254v37M564 254v38M565 254v37M566 253v40M567 254v37M568 253v39M569 254v37M570 254v36M571 252v41M572 252v40M573 252v40M574 252v41M575 252v40M576 254v36M577 254v37M578 253v38M579 252v41M580 255v36M581 253v40M582 254v36M583 254v37M584 254v37M585 253v38M586 252v41M587 252v40M588 254v37M589 252v41M590 254v36M591 254v36M592 253v38M593 254v38M594 252v40M595 255v36M596 252v40M597 254v37M598 253v40M599 255v36M600 252v41M601 252v40M602 253v39M603 252v40M604 253v40M605 252v40M606 253v39M607 252v41M608 253v39M609 253v39M610 253v38M611 252v41M612 255v36M613 253v39M614 254v37M615 253v39M616 254v36M617 254v37M618 253v39M619 254v38M620 253v39M621 253v39M622 254v36M623 253v39M624 254v37M625 254v38M626 253v38M627 254v37M628 254v37M629 254v36M630 253v39M631 253v39M632 254v36M633 253v39M634 254v36M635 253v39M636 254v37M637 254v37M638 253v39M639 254v38M640 254v38M641 254v37M642 253v40M643 254v37M644 253v39M645 255v36M646 252v40M647 252v40M648 254v36M649 254v38M650 255v36M651 254v37M652 253v40M653 253v38M654 255v36M655 252v40M656 253v38M657 255v36M658 254v37M659 255v36M660 253v40M661 254v37M662 254v38M663 253v40M664 253v38M665 255v35M666 255v36M667 254v36M668 253v39M669 253v38M670 254v37M671 254v37M672 255v36M673 255v35M674 253v38M675 253v39M676 254v38M677 253v39M678 254v37M679 255v35M680 255v35M681 253v39M682 253v40M683 252v40M684 254v37M685 253v39M686 253v39M687 253v38M688 253v39M689 253v40M690 254v36M691 253v39M692 254v37M693 253v39M694 253v40M695 253v40M696 253v39M697 253v40M698 255v36M699 255v35M700 254v37M701 253v39M702 253v39M703 253v39M704 255v36M705 253v38M706 254v38M707 255v36M708 254v37M709 253v39M710 255v36M711 253v39M712 255v36M713 255v35M714 254v37M715 253v39M716 253v39M717 253v39M718 255v36M719 255v36M720 255v36M721 255v36M722 254v37M723 253v40M724 253v38M725 254v36M726 253v40M727 254v38M728 255v35M729 255v35M730 254v38M731 255v36M732 254v36M733 254v37M734 254v38M735 253v39M736 255v35M737 253v39M738 254v37M739 254v36M740 254v36M741 254v36M742 254v37M743 254v37M744 253v39M745 254v36M746 255v36M747 253v39M748 253v39M749 255v35M750 254v37M751 254v38M752 255v35M753 254v36M754 255v35M755 255v35M756 254v37M757 255v35M758 254v37M759 254v37M760 254v38M761 253v39M762 255v35M763 255v35M764 254v38M765 254v37M766 255v35M767 255v35M768 255v35M769 253v39M770 254v36M771 254v37M772 254v37M773 253v38M774 254v37M775 254v36M776 254v38M777 255v36M778 255v35M779 253v39M780 253v39M781 254v37M782 254v38M783 253v38M784 254v36M785 255v35M786 255v35M787 253v39M788 253v39M789 254v36M790 253v39M791 254v37M792 254v36M793 255v36M794 254v37M795 254v36M796 253v39M797 253v39M798 254v38M799 254v36M800 255v36M801 253v39M802 254v38M803 254v37M804 255v34M805 253v39M806 255v36M807 254v37M808 255v35M809 253v39M810 253v39M811 254v36M812 253v38M813 253v39M814 253v38M815 255v35M816 255v34M817 255v36M818 254v36M819 255v35M820 255v35M821 255v35M822 253v39M823 253v38M824 255v35M825 254v36M826 253v38M827 255v35M828 254v37M829 255v35M830 253v39M831 254v36M832 255v35M833 254v38M834 255v35M835 255v35M836 253v39M837 253v38M838 255v35M839 255v34M840 253v38M841 255v36M842 254v38M843 255v36M844 255v34M845 255v34M846 254v36M847 254v38M848 253v38M849 255v35M850 255v36M851 254v37M852 254v37M853 254v38M854 254v37M855 254v36M856 254v38M857 255v36M858 254v38M859 255v36M860 255v34M861 254v38M862 255v34M863 254v36M864 254v37M865 254v37M866 254v36M867 253v39M868 255v35M869 254v36M870 254v37M871 253v39M872 255v35M873 256v34M874 254v38M875 254v37M876 255v36M877 253v38M878 253v38M879 255v35M880 255v36M881 255v36M882 255v35M883 255v35M884 256v33M885 254v36M886 256v34M887 255v36M888 255v35M889 256v33M890 257v31M891 257v30M892 257v31M893 256v33M894 257v32M895 256v32M896 258v29M897 257v32M898 256v32M899 258v28M900 258v28M901 257v31M902 258v30M903 258v29M904 257v31M905 257v32M906 256v32M907 258v29M908 257v30M909 258v28M910 257v30M911 257v31M912 258v29M913 257v30M914 257v31M915 258v28M916 258v29M917 258v29M918 257v32M919 257v31M920 257v31M921 258v29M922 257v31M923 258v29M924 257v31M925 258v29M926 257v32M927 258v28M928 258v28M929 257v32M930 258v29M931 257v30M932 258v29M933 257v30M934 257v30M935 258v30M936 258v30M937 257v31M938 258v29M939 257v31M940 258v28M941 257v31M942 258v30M943 257v31M944 258v29M945 257v32M946 257v32M947 257v32M948 257v31M949 257v31M950 259v28M951 258v30M952 258v29M953 258v28M954 257v31M955 256v32M956 257v32M957 258v30M958 258v29M959 257v30M960 258v28M961 257v31M962 257v32M963 257v30M964 257v32M965 258v29M966 257v32M967 258v29M968 257v30M969 257v32M970 257v30M971 257v31M972 258v29M973 258v28M974 257v32M975 257v32M976 257v31M977 258v30M978 258v29M979 258v28M980 257v32M981 257v32M982 258v29M983 257v31M984 257v30M985 258v30M986 257v31M987 256v33M988 257v32M989 256v34M990 255v35M991 254v37M992 253v39M993 251v43M994 250v45M995 252v42M996 253v38M997 253v38M998 254v36M999 255v34M1000 255v35M1001 256v33M1002 256v33M1003 257v31M1004 257v31M1005 257v30M1006 257v31M1007 257v31M1008 257v31M1009 258v30M1010 258v29M1011 257v30M1012 258v29M1013 257v30M1014 259v28M1015 259v27M1016 259v27M1017 262v21M1018 263v19M1019 264v18M1020 265v15M1021 267v12M1022 268v9M1023 268v10M1024 266v14M1025 263v18M1026 262v20M1027 261v24M1028 258v29M1029 257v31M1030 258v30M1031 257v30M1032 256v32M1033 256v33M1034 254v36M1035 255v36M1036 254v36M1037 251v43M1038 252v41M1039 254v38M1040 251v42M1041 253v39M1042 252v41M1043 252v42M1044 251v43M1045 251v43M1046 253v38M1047 255v36M1048 255v35M1049 255v35M1050 256v33M1051 256v33M1052 257v32M1053 255v34M1054 255v34M1055 257v32M1056 257v31M1057 256v34M1058 256v33M1059 256v34M1060 257v32M1061 258v30M1062 257v31M1063 257v31M1064 256v33M1065 256v32M1066 257v30M1067 256v33M1068 256v33M1069 257v32M1070 257v32M1071 257v32M1072 256v33M1073 257v32M1074 256v34M1075 256v33M1076 257v31M1077 256v33M1078 256v32M1079 257v31M1080 256v33M1081 256v34M1082 257v32M1083 256v32M1084 257v30M1085 257v30M1086 257v31M1087 255v34" fill="none" stroke="#6464dc" stroke-width="1.0" transform="translate(.5 0)" shape-rendering="crispEdges"/>
<rect x="1094" y="196" width="17" height="403" fill="url(#gSbV)" />
<path d="M1099.5 207.5 H1106.5 L1103 203.5 Z" fill="#404040" />
<rect x="1095.5" y="213.5" width="15" height="365" fill="url(#gThumbV)" stroke="#9a9a9a" rx="2" />
<rect x="1099" y="392" width="8" height="1" fill="#6a6a6a"/>
<rect x="1099" y="393" width="8" height="1" fill="#ffffff"/>
<rect x="1099" y="395" width="8" height="1" fill="#6a6a6a"/>
<rect x="1099" y="396" width="8" height="1" fill="#ffffff"/>
<rect x="1099" y="398" width="8" height="1" fill="#6a6a6a"/>
<rect x="1099" y="399" width="8" height="1" fill="#ffffff"/>
<path d="M1099.5 588 H1106.5 L1103 592 Z" fill="#404040" />
<rect x="10" y="599" width="1101" height="17" fill="#f0f0f0" />
<rect x="145" y="599" width="949" height="17" fill="url(#gSbH)" />
<path d="M156.5 603.5 V610.5 L152.5 607 Z" fill="#404040" />
<rect x="164.5" y="601.5" width="473" height="13" fill="url(#gThumbH)" stroke="#9a9a9a" rx="2" />
<rect x="397" y="605" width="1" height="6" fill="#7a7a7a"/>
<rect x="398" y="605" width="1" height="6" fill="#ffffff"/>
<rect x="400" y="605" width="1" height="6" fill="#7a7a7a"/>
<rect x="401" y="605" width="1" height="6" fill="#ffffff"/>
<rect x="403" y="605" width="1" height="6" fill="#7a7a7a"/>
<rect x="404" y="605" width="1" height="6" fill="#ffffff"/>
<path d="M1084.5 603.5 V610.5 L1088.5 607 Z" fill="#404040" />
<rect x="10" y="616" width="1101" height="58" fill="#f0f0f0" />
<rect x="10" y="616" width="1101" height="1" fill="#a6a6a6"/>
<rect x="10" y="617" width="1101" height="1" fill="#ffffff"/>
<rect x="10" y="672" width="1101" height="1" fill="#8e8e8e"/>
<rect x="10" y="673" width="1101" height="1" fill="#c8c8c8"/>
<rect x="19" y="620" width="1" height="51" fill="#9a9a9a"/>
<rect x="20" y="620" width="1" height="51" fill="#ffffff"/>
<text x="22" y="635" font-size="12" textLength="95" lengthAdjust="spacingAndGlyphs" >Project Rate (Hz):</text>
<rect x="23.5" y="641.5" width="78" height="22" fill="#fff" stroke="#dcdcdc" rx="2" />
<text x="28" y="656" font-size="12" textLength="33" lengthAdjust="spacingAndGlyphs" >16000</text>
<path d="M89.5 650.5 H97.5 L93.5 654.5 Z" fill="#000" />
<text x="134.5" y="657" font-size="12" textLength="44" lengthAdjust="spacingAndGlyphs" >Snap To</text>
<rect x="182.5" y="646.5" width="12" height="12" fill="#f4f4f4" stroke="#8e8f8f" />
<rect x="184.5" y="648.5" width="8" height="8" fill="#e8e8e8" stroke="#c4c4c4" />
<text x="201" y="635" font-size="12" textLength="81" lengthAdjust="spacingAndGlyphs" >Selection Start:</text>
<rect x="201" y="641" width="149" height="21" fill="#b8b8b8" />
<rect x="201" y="641" width="149" height="1" fill="#7a7a7a"/>
<rect x="201" y="641" width="1" height="21" fill="#7a7a7a"/>
<rect x="201" y="661" width="149" height="1" fill="#ffffff"/>
<rect x="349" y="641" width="1" height="21" fill="#ffffff"/>
<rect x="202" y="642" width="147" height="1" fill="#9a9a9a"/>
<rect x="202" y="642" width="1" height="19" fill="#9a9a9a"/>
<text x="208.2 218.1 224.4 230.8 237.1 243.3 253.3 260.5 267.7 274.6 281.5 291.6 297.4 304.6 315.0 324.8 330.8 336.7" y="656.5" font-size="13" text-anchor="middle" fill="#0c0cb0" xml:space="preserve">00 <tspan fill="#111">h</tspan> 00 <tspan fill="#111">m</tspan> 00<tspan font-weight="bold">.</tspan>000 <tspan fill="#111">s</tspan></text>
<rect x="342" y="643" width="7" height="18" fill="#d2d2d2" />
<rect x="342" y="643" width="1" height="18" fill="#ececec"/>
<path d="M342 649.5 h7 l-3.5 4 Z" fill="#000" />
<circle cx="364.5" cy="630.5" r="5.8" fill="#f4f4f4" stroke="#7a8a9a" stroke-width="1"/>
<circle cx="364.5" cy="630.5" r="4.2" fill="#e6e6e6" stroke="#c0c8d0" stroke-width=".8"/>
<circle cx="364.5" cy="630.5" r="2.8" fill="#1f6fb8" stroke="#0c3f78" stroke-width=".8"/><circle cx="363.7" cy="629.7" r="1" fill="#8fd0f4"/>
<text x="374.5" y="635" font-size="12" textLength="22" lengthAdjust="spacingAndGlyphs" >End</text>
<circle cx="410.5" cy="630.5" r="5.8" fill="#f4f4f4" stroke="#7a8a9a" stroke-width="1"/>
<circle cx="410.5" cy="630.5" r="4.2" fill="#e6e6e6" stroke="#c0c8d0" stroke-width=".8"/>
<text x="420.5" y="635" font-size="12" textLength="37" lengthAdjust="spacingAndGlyphs" >Length</text>
<rect x="359" y="641" width="149" height="21" fill="#b8b8b8" />
<rect x="359" y="641" width="149" height="1" fill="#7a7a7a"/>
<rect x="359" y="641" width="1" height="21" fill="#7a7a7a"/>
<rect x="359" y="661" width="149" height="1" fill="#ffffff"/>
<rect x="507" y="641" width="1" height="21" fill="#ffffff"/>
<rect x="360" y="642" width="147" height="1" fill="#9a9a9a"/>
<rect x="360" y="642" width="1" height="19" fill="#9a9a9a"/>
<text x="366.2 376.1 382.5 388.8 395.1 401.3 411.3 418.5 425.7 432.6 439.5 449.6 455.4 462.6 473.0 482.8 488.8 494.7" y="656.5" font-size="13" text-anchor="middle" fill="#0c0cb0" xml:space="preserve">00 <tspan fill="#111">h</tspan> 00 <tspan fill="#111">m</tspan> 04<tspan font-weight="bold">.</tspan>702 <tspan fill="#111">s</tspan></text>
<rect x="500" y="643" width="7" height="18" fill="#d2d2d2" />
<rect x="500" y="643" width="1" height="18" fill="#ececec"/>
<path d="M500 649.5 h7 l-3.5 4 Z" fill="#000" />
<rect x="515" y="640" width="1" height="25" fill="#a0a0a0"/>
<rect x="516" y="640" width="1" height="25" fill="#ffffff"/>
<text x="522" y="635" font-size="12" textLength="82" lengthAdjust="spacingAndGlyphs" >Audio Position:</text>
<rect x="522" y="641" width="149" height="21" fill="#b8b8b8" />
<rect x="522" y="641" width="149" height="1" fill="#7a7a7a"/>
<rect x="522" y="641" width="1" height="21" fill="#7a7a7a"/>
<rect x="522" y="661" width="149" height="1" fill="#ffffff"/>
<rect x="670" y="641" width="1" height="21" fill="#ffffff"/>
<rect x="523" y="642" width="147" height="1" fill="#9a9a9a"/>
<rect x="523" y="642" width="1" height="19" fill="#9a9a9a"/>
<text x="529.2 539.1 545.5 551.8 558.0 564.3 574.3 581.5 588.7 595.6 602.5 612.6 618.4 625.6 636.0 645.8 651.8 657.7" y="656.5" font-size="13" text-anchor="middle" fill="#0c0cb0" xml:space="preserve">00 <tspan fill="#111">h</tspan> 00 <tspan fill="#111">m</tspan> 00<tspan font-weight="bold">.</tspan>000 <tspan fill="#111">s</tspan></text>
<rect x="663" y="643" width="7" height="18" fill="#d2d2d2" />
<rect x="663" y="643" width="1" height="18" fill="#ececec"/>
<path d="M663 649.5 h7 l-3.5 4 Z" fill="#000" />
<rect x="10" y="674" width="1101" height="21" fill="#f1eded" />
<rect x="10" y="674" width="1101" height="1" fill="#fbfbfb"/>
<rect x="743" y="676" width="1" height="18" fill="#c4c0c0"/>
<rect x="744" y="676" width="1" height="18" fill="#ffffff"/>
<rect x="1106" y="690" width="2" height="2" fill="#b8b4b4" />
<rect x="1102" y="690" width="2" height="2" fill="#b8b4b4" />
<rect x="1106" y="686" width="2" height="2" fill="#b8b4b4" />
<rect x="1098" y="690" width="2" height="2" fill="#b8b4b4" />
<rect x="1102" y="686" width="2" height="2" fill="#b8b4b4" />
<rect x="1106" y="682" width="2" height="2" fill="#b8b4b4" />
<path d="M328.5 608.5 V192.5 Q328.5 186.5 334.5 186.5 H892.5 Q898.5 186.5 898.5 192.5 V608.5 Z" fill="#d3e1f1" stroke="#27303c" />
<path d="M329.5 216 V192.5 Q329.5 187.5 334.5 187.5 H892.5 Q897.5 187.5 897.5 192.5 V216 Z" fill="url(#gTitle)" stroke="#e8f0f8" />
<rect x="329" y="216" width="1" height="392" fill="#e4edf7"/>
<rect x="897" y="216" width="1" height="392" fill="#e4edf7"/>
<rect x="329" y="607" width="569" height="1" fill="#e4edf7"/>
<rect x="335.5" y="215.5" width="556" height="386" fill="#f0f0f0" stroke="#c3d0e0" />
<g transform="translate(346,204) scale(1.0)">
<path d="M-5.6 1.5 V-0.8 A5.6 5.3 0 0 1 5.6 -0.8 V1.5" fill="none" stroke="#0c0c8a" stroke-width="1.4" />
<ellipse cx="-5.2" cy="2.1" rx="2" ry="3.6" fill="#0c0c8a"/><ellipse cx="5.2" cy="2.1" rx="2" ry="3.6" fill="#0c0c8a"/>
<path d="M-3.2 6 V-0.5 Q-3 -2.6 -1.4 -3 L-0.6 -2.4 L0 -3.2 L0.8 -2.4 L1.6 -3 Q3 -2.6 3.2 -0.5 V6 Q0 6.8 -3.2 6 Z" fill="#fcc400" />
<path d="M-3.2 1.6 H3.2 V3 H-3.2 Z" fill="#f03a10" />
<path d="M-3.2 1.1 H3.2 V1.6 H-3.2 Z M-3.2 3 H3.2 V3.5 H-3.2 Z" fill="#f88a10" />
<path d="M-2 -2 Q0 -3 2 -2 V0 H-2 Z" fill="#fde45a" opacity=".7"/>
</g>
<text x="358" y="209" font-size="12" fill="#454545" textLength="54" lengthAdjust="spacingAndGlyphs" >Export File</text>
<rect x="858.5" y="196.5" width="30" height="15" fill="url(#gCap)" stroke="#7f8da6" rx="3" />
<path d="M869.5 200.9 L877.5 207.1 M877.5 200.9 L869.5 207.1" fill="none" stroke="#4a566a" stroke-width="4.2" stroke-linecap="butt"/>
<path d="M869.5 200.9 L877.5 207.1 M877.5 200.9 L869.5 207.1" fill="none" stroke="#fff" stroke-width="2.4000000000000004" stroke-linecap="butt"/>
<text x="427.5" y="238" font-size="11" text-anchor="end" textLength="43" lengthAdjust="spacingAndGlyphs" >Uložit do:</text>
<rect x="435.5" y="224.5" width="260" height="22" fill="#fff" stroke="#cdd1d8" rx="2" />
<rect x="437" y="224" width="257" height="1" fill="#abadb3"/>
<g transform="translate(442,227.5) scale(1.02)">
<path d="M0.5 1.5 Q0.5 .5 1.5 .5 H6 L7.5 2 H12 V14.5 H0.5 Z" fill="#e9c85a" stroke="#c9a030" stroke-width="0.8" />
<path d="M4 2.5 H12.5 V14.5 H4 Z" fill="#f6e29a" stroke="#d4b24a" stroke-width="0.6" />
<path d="M0.5 4 H9 V14.5 H0.5 Z" fill="#f3d66f" stroke="#c9a030" stroke-width="0.7" />
</g>
<text x="461" y="238" font-size="11" textLength="62" lengthAdjust="spacingAndGlyphs" >Horniak zvuk</text>
<path d="M683.5 233.5 H690.5 L687 237.5 Z" fill="#000" />
<circle cx="719" cy="234.2" r="7.4" fill="url(#gBack)" stroke="#4a4a4a" stroke-width=".9"/>
<path d="M723 234.2 H716 M718.6 231 L715.2 234.2 L718.6 237.4" fill="none" stroke="#fff" stroke-width="1.7" />
<g transform="translate(735,230)">
<path d="M0.5 2.5 L1 1 H4.5 L5.5 2.2 H10.5 V4.5 H2.5 L0.5 11.5 Z" fill="#f0d878" stroke="#cfa83a" stroke-width="0.7" />
<path d="M2.6 4.6 H12.6 L10.4 11.6 H0.5 Z" fill="#fbeeb0" stroke="#d4b044" stroke-width="0.7" />
</g>
<path d="M741.5 239.5 Q745.5 236 744.6 231 L747.6 231.4 L743.8 226.2 L739.4 230.4 L742.2 230.8 Q742.8 235 739.8 238 Z" fill="#36b036" stroke="#1a7a1a" stroke-width="0.7" />
<g transform="translate(758,229.5)">
<path d="M0.5 2.5 L1 1 H4.5 L5.5 2.2 H10.5 V4.5 H2.5 L0.5 11.5 Z" fill="#f0d878" stroke="#cfa83a" stroke-width="0.7" />
<path d="M2.6 4.6 H12.6 L10.4 11.6 H0.5 Z" fill="#fbeeb0" stroke="#d4b044" stroke-width="0.7" />
</g>
<circle cx="770" cy="231.2" r="2.1" fill="#ffd84a"/>
<path d="M770 227.6 V234.8 M766.4 231.2 H773.6 M767.5 228.7 L772.5 233.7 M772.5 228.7 L767.5 233.7" fill="none" stroke="#f04a28" stroke-width="0.9" />
<circle cx="770" cy="231.2" r="1.3" fill="#fff0a0"/>
<rect x="781.5" y="227.5" width="14" height="14" fill="#fff" stroke="#2a6ad8" rx="1" />
<rect x="781" y="227" width="15" height="3" fill="#2a6ad8" rx="1" />
<rect x="784.0" y="231.5" width="2.3" height="2.8" fill="#8a86c0" />
<rect x="787.6" y="231.5" width="2.3" height="2.8" fill="#2a5ad0" />
<rect x="791.2" y="231.5" width="2.3" height="2.8" fill="#2a9a3a" />
<rect x="784.0" y="236.0" width="2.3" height="2.8" fill="#e8703a" />
<rect x="787.6" y="236.0" width="2.3" height="2.8" fill="#1a2a90" />
<rect x="791.2" y="236.0" width="2.3" height="2.8" fill="#d8a020" />
<path d="M798.5 232.5 H805.5 L802 236 Z" fill="#222" />
<rect x="342" y="252" width="87" height="338" fill="#f6f6f6" />
<g transform="translate(369,259)">
<path d="M3 22 L9 27.5 L30 23.5 L26 18 Z" fill="#c8c8c8" stroke="#8a8a8a" stroke-width="0.7" />
<path d="M3 22 L9 27.5 V30 L3 24.5 Z" fill="#a8a8a8" />
<path d="M9 27.5 L30 23.5 V26 L9 30 Z" fill="#b8b8b8" />
<circle cx="11" cy="10" r="8.5" fill="#dde4ec" stroke="#8c98a8" stroke-width="1.2"/>
<path d="M11 4.5 V10 L15 12" fill="none" stroke="#6a7684" stroke-width="1.1" />
<path d="M15.5 6.5 L27 5 L29 19 L17.5 21 Z" fill="#fdfdfd" stroke="#a0a8b0" stroke-width="0.8" />
<path d="M18 9 l7 -.9 M18.3 11 l7 -.9 M18.6 13 l7 -.9" fill="none" stroke="#b0b8c0" stroke-width="0.8" />
<path d="M9.5 15.5 L22 14 L23.5 23.5 L11 25.5 Z" fill="#5a9ad8" stroke="#f4f4f4" stroke-width="1.2" />
<path d="M10.5 22 L15 19 L18 21.5 L22.5 18.5 L23.2 23.2 L11.2 25 Z" fill="#4a9a4a" />
</g>
<text x="385.5" y="303" font-size="12" fill="#111" text-anchor="middle" textLength="56.5" lengthAdjust="spacingAndGlyphs" >Naposledy</text>
<text x="385.5" y="317.5" font-size="12" fill="#111" text-anchor="middle" textLength="56" lengthAdjust="spacingAndGlyphs" >navštívené</text>
<g transform="translate(369,337)">
<path d="M.5 .5 H30.5 V24.5 H.5 Z" fill="url(#gDesk)" stroke="#c4ccd8" stroke-width="1" />
<path d="M.5 .5 H30.5 L.5 16 Z" fill="#7ab8f4" opacity=".4"/>
<rect x="1" y="19.5" width="29" height="4.5" fill="#38465e" />
<circle cx="3.6" cy="21.7" r="1.7" fill="#58a8e8"/><circle cx="3.6" cy="21.7" r=".9" fill="#f0c040"/>
</g>
<text x="385.5" y="378" font-size="12" fill="#111" text-anchor="middle" textLength="36" lengthAdjust="spacingAndGlyphs" >Plocha</text>
<g transform="translate(369,410)">
<path d="M1.5 6.5 Q1.5 4.5 3.5 4.5 H12 L14 6.5 H28.5 Q30.5 6.5 30.5 8.5 V26.5 H1.5 Z" fill="#f3d87a" stroke="#c9a438" stroke-width="1" />
<path d="M4 3.5 h6 v3 h-6 Z" fill="#4aa84a" />
<path d="M11 2.5 h6 v4 h-6 Z" fill="#d84a3a" />
<path d="M18 3.5 h6 v3 h-6 Z" fill="#3a7ad8" />
<path d="M1.5 10.5 H30.5 V26.5 H1.5 Z" fill="#f8e6a0" stroke="#c9a438" stroke-width="1" />
<path d="M7 27.5 V17.5 H25 V27.5 H20.5 V22 H11.5 V27.5 Z" fill="#5aa0e0" stroke="#2a68b0" stroke-width="0.9" />
<path d="M8.5 15.5 H23.5 L25 17.5 H7 Z" fill="#9ccaf4" stroke="#2a68b0" stroke-width="0.7" />
</g>
<text x="385.5" y="453" font-size="12" fill="#111" text-anchor="middle" textLength="52" lengthAdjust="spacingAndGlyphs" >Knihovny</text>
<g transform="translate(369,484)">
<path d="M1.5 6 L6.5 4.5 V22.5 L1.5 20.5 Z" fill="#d0d4da" stroke="#8a929c" stroke-width="0.8" />
<rect x="2.5" y="8" width="1.5" height="1.5" fill="#48b048" />
</g>
<g transform="translate(369,484) scale(1.0)">
<ellipse cx="17" cy="25.5" rx="9" ry="2.6" fill="#d4d8dc" stroke="#9a9ea6" stroke-width=".7"/>
<path d="M14 19 L13 25 H21 L20.5 19 Z" fill="#c0c4cc" stroke="#8a9098" stroke-width="0.6" />
<path d="M7.5 2 L30.5 .5 L28.5 20.5 L9.5 18 Z" fill="#eceef2" stroke="#8a929c" stroke-width="1" />
<path d="M9.8 3.8 L28.4 2.6 L26.8 18.2 L11.4 16.2 Z" fill="#1420a8" />
<path d="M17 3.3 L24 2.9 L21 17.4 L15.5 16.7 Z" fill="#4a7cf0" opacity=".85"/>
<path d="M9.8 3.8 L13 3.6 L12.8 16.4 L11.4 16.2 Z" fill="#2a48d0" opacity=".8"/>
</g>
<text x="385.5" y="527.5" font-size="12" fill="#111" text-anchor="middle" textLength="40" lengthAdjust="spacingAndGlyphs" >Počítač</text>
<g transform="translate(369,557)">
<circle cx="12.5" cy="14.3" r="12.6" fill="url(#gGlobe)" stroke="#1a3f90" stroke-width=".6"/>
<path d="M3 9 Q6 3 13 2.5 Q17 4 15 8 Q11 10 10 14 Q8 19 5 20 Q1 15 3 9 Z M14 14 Q19 11 22 14 Q23 20 18 25 Q13 24 13 19 Q13 16 14 14 Z" fill="#3aa83a" opacity=".92"/>
<path d="M5 8 Q8 4 12 4.5 Q11 8 8 10 Z" fill="#8ad86a" opacity=".8"/>
</g>
<g transform="translate(375.5,565) scale(0.87)">
<ellipse cx="17" cy="25.5" rx="9" ry="2.6" fill="#d4d8dc" stroke="#9a9ea6" stroke-width=".7"/>
<path d="M14 19 L13 25 H21 L20.5 19 Z" fill="#c0c4cc" stroke="#8a9098" stroke-width="0.6" />
<path d="M7.5 2 L30.5 .5 L28.5 20.5 L9.5 18 Z" fill="#eceef2" stroke="#8a929c" stroke-width="1" />
<path d="M9.8 3.8 L28.4 2.6 L26.8 18.2 L11.4 16.2 Z" fill="#1420a8" />
<path d="M17 3.3 L24 2.9 L21 17.4 L15.5 16.7 Z" fill="#4a7cf0" opacity=".85"/>
<path d="M9.8 3.8 L13 3.6 L12.8 16.4 L11.4 16.2 Z" fill="#2a48d0" opacity=".8"/>
</g>
<rect x="435" y="252" width="450" height="254" fill="#fff" />
<rect x="435" y="252" width="450" height="22" fill="url(#gHdr)" />
<rect x="435" y="252" width="160" height="22" fill="url(#gHdrSel)" />
<rect x="435" y="273" width="450" height="1" fill="#d5d5d5"/>
<rect x="594" y="252" width="1" height="21" fill="#dcdfe3"/>
<rect x="594" y="274" width="1" height="216" fill="#eef2f7"/>
<rect x="634" y="252" width="1" height="21" fill="#dcdfe3"/>
<rect x="634" y="274" width="1" height="216" fill="#eef2f7"/>
<rect x="794" y="252" width="1" height="21" fill="#dcdfe3"/>
<rect x="794" y="274" width="1" height="216" fill="#eef2f7"/>
<rect x="435" y="252" width="1" height="21" fill="#c7e0f4"/>
<path d="M512.5 257 L515.5 254 L518.5 257 Z" fill="#a8c4dc" stroke="#6a8aa8" stroke-width="0.7" />
<text x="441" y="267.5" font-size="12" textLength="76" lengthAdjust="spacingAndGlyphs" >Název položky</text>
<text x="600" y="267.5" font-size="12" >#</text>
<text x="641" y="267.5" font-size="12" textLength="32" lengthAdjust="spacingAndGlyphs" >Název</text>
<text x="801" y="267.5" font-size="12" textLength="104.5" lengthAdjust="spacingAndGlyphs" clip-path="url(#clHdr)">Přispívající interpreti</text>
<rect x="435" y="490" width="450" height="16" fill="url(#gSbH)" />
<path d="M444.5 494.5 V501.5 L440.5 498 Z" fill="#404040" />
<rect x="453.5" y="490.5" width="301" height="15" fill="url(#gThumbH)" stroke="#9a9a9a" rx="2" />
<rect x="600" y="494" width="1" height="8" fill="#6a6a6a"/>
<rect x="601" y="494" width="1" height="8" fill="#ffffff"/>
<rect x="603" y="494" width="1" height="8" fill="#6a6a6a"/>
<rect x="604" y="494" width="1" height="8" fill="#ffffff"/>
<rect x="606" y="494" width="1" height="8" fill="#6a6a6a"/>
<rect x="607" y="494" width="1" height="8" fill="#ffffff"/>
<path d="M874.5 494.5 V501.5 L878.5 498 Z" fill="#404040" />
<text x="437.5" y="530.5" font-size="11" textLength="74" lengthAdjust="spacingAndGlyphs" >Název souboru:</text>
<rect x="531.5" y="516.5" width="245" height="22" fill="#fff" stroke="#cdd1d8" rx="2" />
<rect x="533" y="516" width="242" height="1" fill="#abadb3"/>
<text x="535" y="531" font-size="11" textLength="67" lengthAdjust="spacingAndGlyphs" >sound_for_hip</text>
<path d="M764.5 524.5 H771.5 L768 528.5 Z" fill="#000" />
<text x="437.5" y="556.5" font-size="11" textLength="68" lengthAdjust="spacingAndGlyphs" >Uložit jako typ:</text>
<rect x="531.5" y="543.5" width="245" height="20" fill="url(#gBtn)" stroke="#707070" rx="3" />
<rect x="532.5" y="544.5" width="243" height="18" fill="none" stroke="#fcfcfc" rx="2" opacity=".7"/>
<text x="535" y="557.5" font-size="11" textLength="119" lengthAdjust="spacingAndGlyphs" >Other uncompressed files</text>
<path d="M764.5 551.5 H771.5 L768 555.5 Z" fill="#000" />
<rect x="811.5" y="516.5" width="72" height="21" fill="url(#gBtn)" stroke="#707070" rx="3" />
<rect x="812.5" y="517.5" width="70" height="19" fill="none" stroke="#fcfcfc" rx="2" opacity=".75"/>
<text x="847.5" y="531.0" font-size="11" text-anchor="middle" textLength="26" lengthAdjust="spacingAndGlyphs" >Uložit</text>
<rect x="811.5" y="542.5" width="72" height="21" fill="url(#gBtn)" stroke="#707070" rx="3" />
<rect x="812.5" y="543.5" width="70" height="19" fill="none" stroke="#fcfcfc" rx="2" opacity=".75"/>
<text x="847.5" y="557.0" font-size="11" text-anchor="middle" textLength="30" lengthAdjust="spacingAndGlyphs" >Storno</text>
<rect x="811.5" y="571.5" width="72" height="20" fill="url(#gBtn)" stroke="#707070" rx="3" />
<rect x="812.5" y="572.5" width="70" height="18" fill="none" stroke="#fcfcfc" rx="2" opacity=".75"/>
<text x="847.5" y="585.5" font-size="11" text-anchor="middle" textLength="45" lengthAdjust="spacingAndGlyphs" >Options...</text>
<rect x="888" y="597" width="2" height="2" fill="#b8bcc4" />
<rect x="885" y="597" width="2" height="2" fill="#b8bcc4" />
<rect x="888" y="594" width="2" height="2" fill="#b8bcc4" />
<path d="M416.5 454.5 V275.5 Q416.5 270.5 421.5 270.5 H740.5 Q745.5 270.5 745.5 275.5 V454.5 Z" fill="#d9e5f3" stroke="#2f3640" />
<path d="M417.5 295 V275.5 Q417.5 271.5 421.5 271.5 H740.5 Q744.5 271.5 744.5 275.5 V295 Z" fill="url(#gTitle)" stroke="#eaf1f8" />
<rect x="419" y="295" width="324" height="157" fill="#f0f0f0" />
<text x="423" y="288" font-size="12" fill="#555555" textLength="165" lengthAdjust="spacingAndGlyphs" >Specify Uncompressed Options</text>
<rect x="710.5" y="275.5" width="30" height="16" fill="url(#gCap)" stroke="#7f8da6" rx="3" />
<path d="M721.5 280.4 L729.5 286.6 M729.5 280.4 L721.5 286.6" fill="none" stroke="#4a566a" stroke-width="4.2" stroke-linecap="butt"/>
<path d="M721.5 280.4 L729.5 286.6 M729.5 280.4 L721.5 286.6" fill="none" stroke="#fff" stroke-width="2.4000000000000004" stroke-linecap="butt"/>
<rect x="425.5" y="307.5" width="312" height="99" fill="none" stroke="#d5dfe5" rx="3" />
<rect x="429" y="300" width="143" height="14" fill="#f0f0f0" />
<text x="432" y="311.5" font-size="11" textLength="136" lengthAdjust="spacingAndGlyphs" >Uncompressed Export Setup</text>
<text x="481" y="337" font-size="11" text-anchor="end" textLength="38.5" lengthAdjust="spacingAndGlyphs" >Header:</text>
<rect x="492.5" y="322.5" width="236" height="20" fill="url(#gBtn)" stroke="#707070" rx="3" />
<rect x="493.5" y="323.5" width="234" height="18" fill="none" stroke="#fcfcfc" rx="2" opacity=".7"/>
<text x="496" y="337" font-size="11" textLength="78" lengthAdjust="spacingAndGlyphs" >WAV (Microsoft)</text>
<path d="M715.5 330.5 H722.5 L719 334.5 Z" fill="#000" />
<text x="481" y="368" font-size="11" text-anchor="end" textLength="46.5" lengthAdjust="spacingAndGlyphs" >Encoding:</text>
<rect x="492.5" y="353.5" width="236" height="20" fill="url(#gBtn)" stroke="#707070" rx="3" />
<rect x="493.5" y="354.5" width="234" height="18" fill="none" stroke="#fcfcfc" rx="2" opacity=".7"/>
<text x="496" y="368" font-size="11" textLength="86" lengthAdjust="spacingAndGlyphs" >Signed 16 bit PCM</text>
<path d="M715.5 361.5 H722.5 L719 365.5 Z" fill="#000" />
<text x="433.7" y="395" font-size="11" textLength="293.5" lengthAdjust="spacingAndGlyphs" >(Not all combinations of headers and encodings are possible.)</text>
<rect x="578.5" y="420.5" width="72" height="20" fill="url(#gBtn)" stroke="#707070" rx="3" />
<rect x="579.5" y="421.5" width="70" height="18" fill="none" stroke="#fcfcfc" rx="2" opacity=".75"/>
<text x="614.5" y="434.5" font-size="11" text-anchor="middle" textLength="14" lengthAdjust="spacingAndGlyphs" >OK</text>
<rect x="659.5" y="420.5" width="72" height="20" fill="url(#gBtn)" stroke="#707070" rx="3" />
<rect x="660.5" y="421.5" width="70" height="18" fill="none" stroke="#fcfcfc" rx="2" opacity=".75"/>
<text x="695.5" y="434.5" font-size="11" text-anchor="middle" textLength="32" lengthAdjust="spacingAndGlyphs" >Cancel</text>
<path fill-rule="evenodd" fill="#ed1c24" d="M523 534.5H786V573.5H523Z M531 542.5V565.5H778V542.5Z"/>
<path fill-rule="evenodd" fill="#ed1c24" d="M800 561H896V605H800Z M808 569V597H888V569Z"/>
<path fill-rule="evenodd" fill="#ed1c24" d="M10 614H129V678H10Z M18 622V670H121V622Z"/>
</svg>
</body></html>
